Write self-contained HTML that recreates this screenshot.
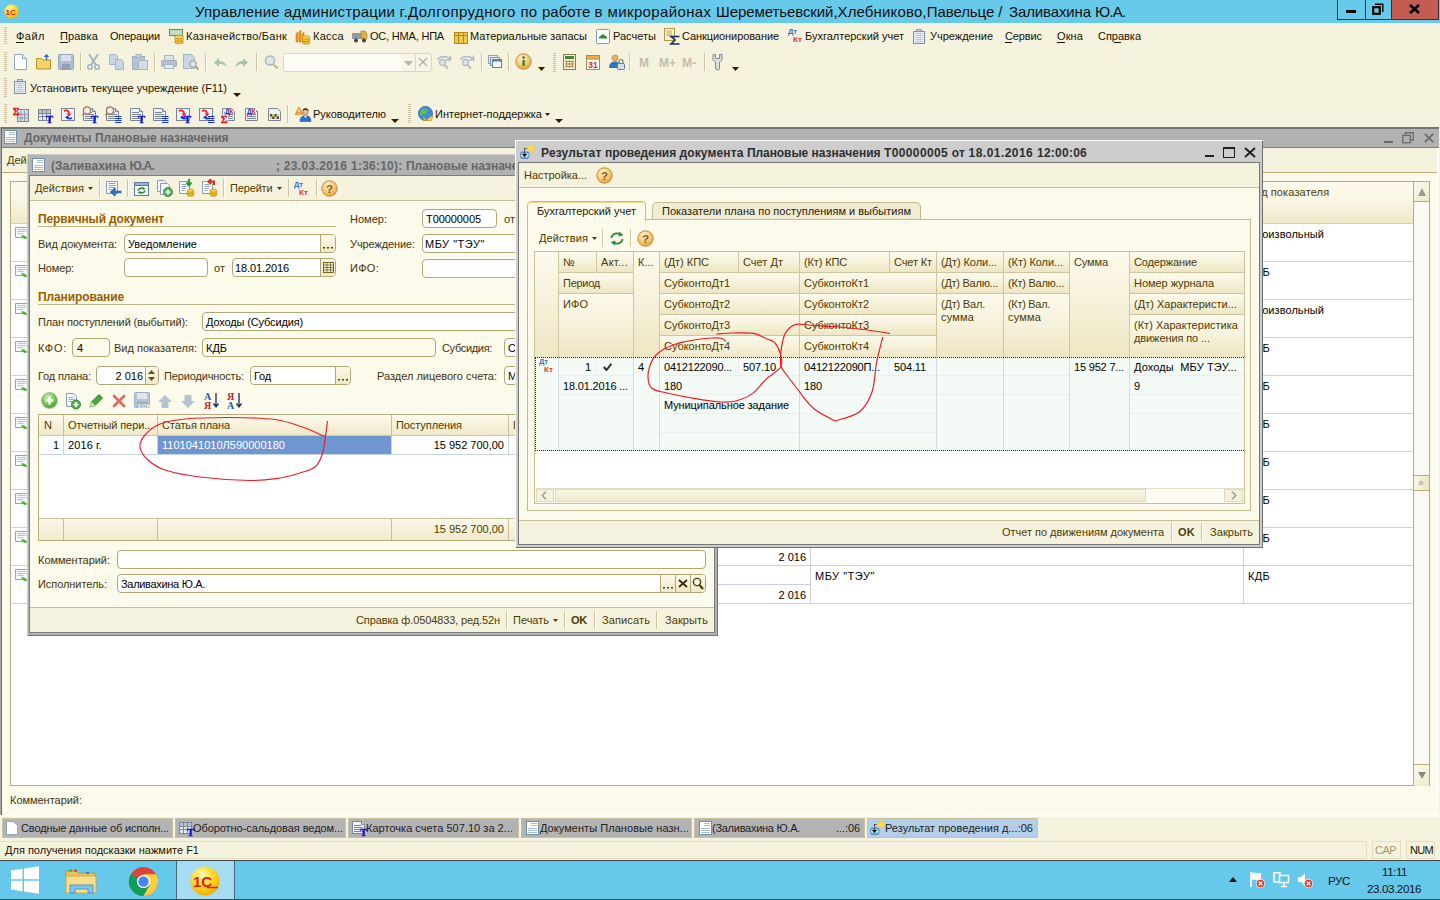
<!DOCTYPE html>
<html><head><meta charset="utf-8"><title>1C</title>
<style>
html,body{margin:0;padding:0;}
body{width:1440px;height:900px;overflow:hidden;position:relative;background:#F5F2DE;font-family:"Liberation Sans",sans-serif;font-size:11px;}
div,span,svg{position:absolute;}
span{white-space:pre;}

</style></head><body>
<div style="left:0px;top:0px;width:1440px;height:23px;background:#68CAEA;"></div>
<svg style="left:4px;top:4px" width="15" height="15" viewBox="0 0 15 15"><defs><radialGradient id="lg" cx="0.4" cy="0.3" r="0.8"><stop offset="0" stop-color="#FFF6A0"/><stop offset="0.6" stop-color="#FFD11A"/><stop offset="1" stop-color="#E8A800"/></radialGradient></defs><circle cx="7.5" cy="7.5" r="7.2" fill="url(#lg)"/><text x="1.5" y="10.5" font-family="Liberation Sans" font-weight="700" font-size="8" fill="#E0201A">1С</text></svg>
<span style="top:1.80px;font-size:15px;line-height:20px;color:#101010;letter-spacing:0.131px;left:195px;">Управление </span>
<span style="top:1.80px;font-size:15px;line-height:20px;color:#101010;letter-spacing:0.169px;left:284px;">администрации </span>
<span style="top:1.80px;font-size:15px;line-height:20px;color:#101010;letter-spacing:0.393px;left:399.4px;">г.Долгопрудного </span>
<span style="top:1.80px;font-size:15px;line-height:20px;color:#101010;letter-spacing:0.320px;left:520.4px;">по </span>
<span style="top:1.80px;font-size:15px;line-height:20px;color:#101010;left:542px;">работе </span>
<span style="top:1.80px;font-size:15px;line-height:20px;color:#101010;letter-spacing:0.430px;left:594.5px;">в </span>
<span style="top:1.80px;font-size:15px;line-height:20px;color:#101010;letter-spacing:0.374px;left:607.5px;">микрорайонах </span>
<span style="top:1.80px;font-size:15px;line-height:20px;color:#101010;letter-spacing:-0.083px;left:716px;">Шереметьевский,</span>
<span style="top:1.80px;font-size:15px;line-height:20px;color:#101010;letter-spacing:0.147px;left:837.5px;">Хлебниково,</span>
<span style="top:1.80px;font-size:15px;line-height:20px;color:#101010;letter-spacing:-0.076px;left:926.7px;">Павельце </span>
<span style="top:1.80px;font-size:15px;line-height:20px;color:#101010;letter-spacing:1.178px;left:998.3px;">/ </span>
<span style="top:1.80px;font-size:15px;line-height:20px;color:#101010;letter-spacing:-0.124px;left:1009px;">Заливахина </span>
<span style="top:1.80px;font-size:15px;line-height:20px;color:#101010;letter-spacing:-0.800px;left:1095px;">Ю.А.</span>
<div style="left:1337px;top:-1px;width:29px;height:21px;border:1px solid #3A3030;box-sizing:border-box;"></div>
<div style="left:1365px;top:-1px;width:27px;height:21px;border:1px solid #3A3030;box-sizing:border-box;"></div>
<div style="left:1391px;top:-1px;width:48px;height:21px;background:#C55C51;border:1px solid #3A3030;box-sizing:border-box;"></div>
<div style="left:1346px;top:10px;width:10px;height:3px;background:#000;"></div>
<svg style="left:1372px;top:3px" width="12" height="12" viewBox="0 0 12 12"><path d="M3 1.2H10.8V9" fill="none" stroke="#000" stroke-width="1.4"/><rect x="1.2" y="4.2" width="6.6" height="6.6" fill="none" stroke="#000" stroke-width="2.2"/></svg>
<svg style="left:1409px;top:4px" width="11" height="10" viewBox="0 0 11 10"><path d="M1 1L10 9M10 1L1 9" stroke="#000" stroke-width="2.6"/></svg>
<div style="left:4px;top:27px;width:3px;height:18px;background:repeating-linear-gradient(to bottom,#C9C2A0 0,#C9C2A0 1px,transparent 1px,transparent 2px)"></div>
<span style="top:29.19px;font-size:11px;line-height:14px;color:#1A1200;letter-spacing:0.488px;left:16px;">Файл</span>
<span style="top:29.19px;font-size:11px;line-height:14px;color:#1A1200;letter-spacing:0.138px;left:60px;">Правка</span>
<span style="top:29.19px;font-size:11px;line-height:14px;color:#1A1200;letter-spacing:-0.184px;left:110px;">Операции</span>
<span style="top:29.19px;font-size:11px;line-height:14px;color:#1A1200;letter-spacing:0.233px;left:186px;">Казначейство/Банк</span>
<span style="top:29.19px;font-size:11px;line-height:14px;color:#1A1200;letter-spacing:0.269px;left:313px;">Касса</span>
<span style="top:29.19px;font-size:11px;line-height:14px;color:#1A1200;letter-spacing:-0.197px;left:370px;">ОС, НМА, НПА</span>
<span style="top:29.19px;font-size:11px;line-height:14px;color:#1A1200;letter-spacing:0.025px;left:470px;">Материальные запасы</span>
<span style="top:29.19px;font-size:11px;line-height:14px;color:#1A1200;letter-spacing:0.013px;left:613px;">Расчеты</span>
<span style="top:29.19px;font-size:11px;line-height:14px;color:#1A1200;letter-spacing:-0.079px;left:682px;">Санкционирование</span>
<span style="top:29.19px;font-size:11px;line-height:14px;color:#1A1200;letter-spacing:-0.007px;left:805px;">Бухгалтерский учет</span>
<span style="top:29.19px;font-size:11px;line-height:14px;color:#1A1200;letter-spacing:-0.006px;left:930px;">Учреждение</span>
<span style="top:29.19px;font-size:11px;line-height:14px;color:#1A1200;letter-spacing:-0.112px;left:1005px;">Сервис</span>
<span style="top:29.19px;font-size:11px;line-height:14px;color:#1A1200;letter-spacing:0.109px;left:1057px;">Окна</span>
<span style="top:29.19px;font-size:11px;line-height:14px;color:#1A1200;letter-spacing:-0.022px;left:1098px;">Справка</span>
<div style="left:16px;top:42px;width:8px;height:1px;background:#1A1200;"></div>
<div style="left:60px;top:42px;width:8px;height:1px;background:#1A1200;"></div>
<div style="left:1005px;top:42px;width:7px;height:1px;background:#1A1200;"></div>
<div style="left:1057px;top:42px;width:8px;height:1px;background:#1A1200;"></div>
<div style="left:1114px;top:42px;width:7px;height:1px;background:#1A1200;"></div>
<svg style="left:169px;top:28px" width="16" height="16" viewBox="0 0 16 16"><rect x="0.5" y="1.5" width="13" height="6" fill="#BFE0C0" stroke="#5A8F6A"/><ellipse cx="10" cy="14" rx="4.5" ry="1.8" fill="#F2C230" stroke="#B8860B" stroke-width=".7"/><ellipse cx="10" cy="11.5" rx="4.5" ry="1.8" fill="#F2C230" stroke="#B8860B" stroke-width=".7"/><ellipse cx="10" cy="9" rx="4.5" ry="1.8" fill="#F7D55A" stroke="#B8860B" stroke-width=".7"/></svg>
<svg style="left:295px;top:29px" width="16" height="16" viewBox="0 0 16 16"><path d="M1 13V5l2-2v10zM4 13V3l2-2v12zM7 13V5l2-2v10z" fill="#F59A1C" stroke="#C46A00" stroke-width=".5"/><ellipse cx="11" cy="13.5" rx="4" ry="1.7" fill="#F2C230" stroke="#B8860B" stroke-width=".7"/><ellipse cx="11" cy="11" rx="4" ry="1.7" fill="#F2C230" stroke="#B8860B" stroke-width=".7"/><ellipse cx="11" cy="8.5" rx="4" ry="1.7" fill="#F7D55A" stroke="#B8860B" stroke-width=".7"/></svg>
<svg style="left:352px;top:30px" width="16" height="14" viewBox="0 0 16 14"><rect x="0" y="3" width="9" height="6" fill="#8E9AA6"/><path d="M9 1h4l2 3v5H9z" fill="#E0B040" stroke="#9A7A20" stroke-width=".6"/><circle cx="4" cy="10.5" r="2" fill="#444"/><circle cx="12" cy="10.5" r="2" fill="#444"/></svg>
<svg style="left:454px;top:32px" width="14" height="12" viewBox="0 0 14 12"><rect x="0.5" y="0.5" width="13" height="11" fill="#F0C84A" stroke="#B08A1A"/><path d="M0.5 3.5h13M4.5 .5v11M9.5 .5v11" stroke="#B08A1A" stroke-width="1"/></svg>
<svg style="left:596px;top:29px" width="14" height="15" viewBox="0 0 14 15"><rect x="0.5" y="0.5" width="13" height="14" rx="1" fill="#fff" stroke="#7A9CC0"/><path d="M3 8l4-3 4 3z" fill="#2E8B3A"/><path d="M3 8h8v1.5H3z" fill="#2E8B3A"/></svg>
<svg style="left:664px;top:28px" width="17" height="17" viewBox="0 0 17 17"><rect x="0.5" y="0.5" width="10" height="12" fill="#FBF3C8" stroke="#B09A50"/><path d="M2 3h6M2 5h6M2 7h6" stroke="#B09A50" stroke-width=".8"/><path d="M15.5 8.5H7l4 3.5-4 4h8.5" fill="none" stroke="#1B2A5A" stroke-width="1.6"/></svg>
<svg style="left:788px;top:28px" width="17" height="15" viewBox="0 0 17 15"><text x="0" y="6" font-family="Liberation Sans" font-weight="700" font-size="7.5" fill="#3A73B8">Дт</text><text x="5" y="13.5" font-family="Liberation Sans" font-weight="700" font-size="8" fill="#E03A2A">Кт</text></svg>
<svg style="left:913px;top:29px" width="12" height="15" viewBox="0 0 12 15"><rect x="3.500" y=".5" width="5" height="2" fill="#C9D5E2" stroke="#7D8FA6" stroke-width=".8"/><rect x=".5" y="2.500" width="11" height="12" fill="#E6EDF5" stroke="#7D8FA6"/><path d="M2.500 4.500h7M2.500 6.500h7M2.500 8.500h7M2.500 10.500h7M2.500 12.500h7" stroke="#9FB2CC" stroke-width="1"/><path d="M3.500 3v11M6 3v11M8.500 3v11" stroke="#E6EDF5" stroke-width=".8"/></svg>
<div style="left:4px;top:52px;width:3px;height:20px;background:repeating-linear-gradient(to bottom,#C9C2A0 0,#C9C2A0 1px,transparent 1px,transparent 2px)"></div>
<svg style="left:14px;top:54px" width="13" height="16" viewBox="0 0 13 16"><path d="M.5 .5h8l4 4v11H.5z" fill="#fff" stroke="#8FA7C4"/><path d="M8.5 .5v4h4" fill="#E6EEF7" stroke="#8FA7C4"/></svg>
<svg style="left:36px;top:54px" width="15" height="16" viewBox="0 0 15 16"><path d="M.5 4.5h5l1.5 1.5h7.5v9H.5z" fill="#F3D36A" stroke="#B8922A"/><path d="M10.5 6V1M8.5 3l2-2 2 2" fill="none" stroke="#2F6AA8" stroke-width="1.3"/></svg>
<svg style="left:58px;top:54px" width="16" height="16" viewBox="0 0 16 16"><rect x=".5" y=".5" width="15" height="15" rx="1" fill="#AEBFD0" stroke="#93A6BA"/><rect x="3" y="1" width="10" height="6" fill="#D9E2EB"/><rect x="4" y="10" width="8" height="5.5" fill="#8EA2B6"/></svg>
<div style="left:80px;top:53px;width:1px;height:18px;background:#CEC6A2;"></div>
<div style="left:81px;top:53px;width:1px;height:18px;background:#FFFEF6;"></div>
<svg style="left:87px;top:54px" width="13" height="16" viewBox="0 0 13 16"><path d="M2 0l7 11M11 0L4 11" stroke="#9FB2C6" stroke-width="1.8"/><circle cx="3" cy="13" r="2.2" fill="none" stroke="#9FB2C6" stroke-width="1.5"/><circle cx="10" cy="13" r="2.2" fill="none" stroke="#9FB2C6" stroke-width="1.5"/></svg>
<svg style="left:109px;top:54px" width="16" height="16" viewBox="0 0 16 16"><path d="M.5 .5h6l2 2v8h-8z" fill="#C9D5E2" stroke="#A4B6C9"/><path d="M6.5 5.5h6l2 2v8h-8z" fill="#C9D5E2" stroke="#A4B6C9"/></svg>
<svg style="left:132px;top:54px" width="16" height="16" viewBox="0 0 16 16"><rect x=".5" y="2.5" width="12" height="13" fill="#B4C3D3" stroke="#9FB0C3"/><rect x="4" y=".5" width="5" height="3" fill="#C9D5E2" stroke="#9FB0C3"/><rect x="6.5" y="6.5" width="9" height="9" fill="#D5DEE8" stroke="#A4B6C9"/></svg>
<div style="left:154px;top:53px;width:1px;height:18px;background:#CEC6A2;"></div>
<div style="left:155px;top:53px;width:1px;height:18px;background:#FFFEF6;"></div>
<svg style="left:161px;top:54px" width="16" height="16" viewBox="0 0 16 16"><rect x="3.5" y="1.5" width="9" height="5" fill="#DCE3EA" stroke="#AAB6C2"/><rect x=".5" y="6.5" width="15" height="6" rx="1" fill="#B8C1CB" stroke="#A3AEBA"/><rect x="3.5" y="10.5" width="9" height="4" fill="#E4E9EE" stroke="#AAB6C2"/></svg>
<svg style="left:183px;top:54px" width="16" height="16" viewBox="0 0 16 16"><path d="M.5 .5h8l3 3v11H.5z" fill="#C9D5E2" stroke="#A4B6C9"/><circle cx="10" cy="10" r="3.2" fill="#DDE6EF" stroke="#A0A8B0" stroke-width="1.2"/><path d="M12.5 12.5l3 3" stroke="#B09070" stroke-width="1.8"/></svg>
<div style="left:205px;top:53px;width:1px;height:18px;background:#CEC6A2;"></div>
<div style="left:206px;top:53px;width:1px;height:18px;background:#FFFEF6;"></div>
<svg style="left:214px;top:58px" width="13" height="9" viewBox="0 0 13 9"><path d="M0 4.5L5 0v3c4 0 7 2 7.5 6C10.5 6.5 8 6 5 6v3z" fill="#A8C4AE"/></svg>
<svg style="left:235px;top:58px" width="13" height="9" viewBox="0 0 13 9"><path d="M13 4.5L8 0v3C4 3 1 5 .5 9 2.500 6.500 5 6 8 6v3z" fill="#A8C4AE"/></svg>
<div style="left:256px;top:53px;width:1px;height:18px;background:#CEC6A2;"></div>
<div style="left:257px;top:53px;width:1px;height:18px;background:#FFFEF6;"></div>
<svg style="left:264px;top:54px" width="15" height="16" viewBox="0 0 15 16"><circle cx="6" cy="6.5" r="4.6" fill="#DCE4EC" stroke="#AEB8C2" stroke-width="1.5"/><path d="M9.500 10.500l4 4" stroke="#C2B4A2" stroke-width="2.2"/></svg>
<div style="left:283px;top:53px;width:149px;height:19px;background:#F7F5E6;border:1px solid #DDD7BC;box-sizing:border-box;border-radius:3px;"></div>
<div style="left:284px;top:54px;width:117px;height:17px;background:#FDFDF8;border-radius:2px;"></div>
<svg style="left:404px;top:61px" width="9" height="5" viewBox="0 0 9 5"><path d="M0 0H9L4.5 5Z" fill="#B5B5AE"/></svg>
<div style="left:415px;top:54px;width:1px;height:17px;background:#DDD7BC;"></div>
<svg style="left:418px;top:57px" width="10" height="10" viewBox="0 0 10 10"><path d="M1 1l8 8M9 1L1 9" stroke="#AFAFA8" stroke-width="1.4"/></svg>
<svg style="left:436px;top:54px" width="16" height="16" viewBox="0 0 16 16"><path d="M1.5 5.5C4 1.500 11 1.500 14 5" fill="none" stroke="#A9BBCD" stroke-width="1.6"/><path d="M14.500 1.500v4.500h-4.500" fill="none" stroke="#A9BBCD" stroke-width="1.4"/><circle cx="6.500" cy="8.500" r="3" fill="#DCE4EC" stroke="#B4BDC6" stroke-width="1.3"/><path d="M8.800 11l3 3.500" stroke="#C9B8A6" stroke-width="2"/></svg>
<svg style="left:459px;top:54px" width="16" height="16" viewBox="0 0 16 16"><path d="M1.5 5.5C4 1.500 11 1.500 14 5" fill="none" stroke="#A9BBCD" stroke-width="1.6"/><path d="M14.500 1.500v4.500h-4.500" fill="none" stroke="#A9BBCD" stroke-width="1.4"/><circle cx="6.500" cy="8.500" r="3" fill="#DCE4EC" stroke="#B4BDC6" stroke-width="1.3"/><path d="M8.800 11l3 3.500" stroke="#C9B8A6" stroke-width="2"/></svg>
<div style="left:481px;top:53px;width:1px;height:18px;background:#CEC6A2;"></div>
<div style="left:482px;top:53px;width:1px;height:18px;background:#FFFEF6;"></div>
<svg style="left:488px;top:55px" width="15" height="14" viewBox="0 0 15 14"><rect x=".5" y=".5" width="9" height="8" fill="#E8EEF5" stroke="#8DA3BC"/><rect x="2.5" y="2.500" width="9" height="8" fill="#E8EEF5" stroke="#7D95B0"/><rect x="4.5" y="4.500" width="9" height="8" fill="#F6F9FC" stroke="#5F7EA3"/><path d="M4.500 5.500h9" stroke="#5F7EA3" stroke-width="2"/></svg>
<div style="left:508px;top:53px;width:1px;height:18px;background:#CEC6A2;"></div>
<div style="left:509px;top:53px;width:1px;height:18px;background:#FFFEF6;"></div>
<svg style="left:515px;top:53px" width="17" height="17" viewBox="0 0 17 17"><defs><radialGradient id="ig" cx="0.4" cy="0.3" r="0.8"><stop offset="0" stop-color="#FFF3D0"/><stop offset="0.6" stop-color="#F2C46A"/><stop offset="1" stop-color="#D9962E"/></radialGradient></defs><circle cx="8.500" cy="8.500" r="7.700" fill="url(#ig)" stroke="#C08A3A"/><rect x="7.500" y="7" width="2.200" height="6" fill="#3E7A2A"/><circle cx="8.600" cy="4.600" r="1.300" fill="#3E7A2A"/></svg>
<svg style="left:537.5px;top:67px" width="7" height="4" viewBox="0 0 7 4"><path d="M0 0H7L3.5 4Z" fill="#2A2000"/></svg>
<div style="left:553px;top:53px;width:3px;height:20px;background:repeating-linear-gradient(to bottom,#C9C2A0 0,#C9C2A0 1px,transparent 1px,transparent 2px)"></div>
<svg style="left:563px;top:54px" width="13" height="16" viewBox="0 0 13 16"><rect x=".5" y=".5" width="12" height="15" fill="#FFF3C9" stroke="#8A7A4A"/><rect x="2" y="2" width="9" height="3" fill="#3E8A3A"/><path d="M2.500 7.500h2M5.500 7.500h2M8.500 7.500h2M2.500 10h2M5.500 10h2M8.500 10h2M2.500 12.500h2M5.500 12.500h2M8.500 12.500h2" stroke="#7A5A2A" stroke-width="1.400"/></svg>
<svg style="left:586px;top:54px" width="14" height="16" viewBox="0 0 14 16"><rect x=".5" y="1.500" width="13" height="14" fill="#fff" stroke="#B08A4A"/><rect x=".5" y="1.500" width="13" height="3.500" fill="#F0B040" stroke="#B08A4A"/><text x="7" y="14" font-family="Liberation Sans" font-weight="700" font-size="8.500" text-anchor="middle" fill="#D02A1A">31</text></svg>
<svg style="left:609px;top:54px" width="16" height="16" viewBox="0 0 16 16"><circle cx="6" cy="4" r="3" fill="#F0B060" stroke="#B07A30" stroke-width=".6"/><path d="M0 14c0-5 3-6.500 6-6.500s4 1 5 3v3.500z" fill="#2F74C0"/><rect x="8.500" y="9.500" width="7" height="6" rx="1" fill="#D8DEE6" stroke="#6A7A8C"/><path d="M10 9.500v-2a2 2 0 014 0v2" fill="none" stroke="#6A7A8C" stroke-width="1.200"/></svg>
<div style="left:629px;top:53px;width:1px;height:18px;background:#CEC6A2;"></div>
<div style="left:630px;top:53px;width:1px;height:18px;background:#FFFEF6;"></div>
<span style="top:54.84px;font-size:12px;line-height:16px;color:#C4BDAA;font-weight:700;left:639px;">M</span>
<span style="top:54.84px;font-size:12px;line-height:16px;color:#C4BDAA;font-weight:700;left:659px;">M+</span>
<span style="top:54.84px;font-size:12px;line-height:16px;color:#C4BDAA;font-weight:700;left:682px;">M-</span>
<div style="left:704px;top:53px;width:1px;height:18px;background:#CEC6A2;"></div>
<div style="left:705px;top:53px;width:1px;height:18px;background:#FFFEF6;"></div>
<svg style="left:711px;top:54px" width="13" height="17" viewBox="0 0 13 17"><path d="M2 .5v4.500c0 1.500 1 2.500 2.500 3v6a2 2 0 004 0V8C10 7.500 11 6.500 11 5V.5H8.500v4h-4v-4z" fill="#DADDE0" stroke="#7A8088" stroke-width=".9"/></svg>
<svg style="left:732px;top:67px" width="7" height="4" viewBox="0 0 7 4"><path d="M0 0H7L3.5 4Z" fill="#2A2000"/></svg>
<div style="left:4px;top:78px;width:3px;height:20px;background:repeating-linear-gradient(to bottom,#C9C2A0 0,#C9C2A0 1px,transparent 1px,transparent 2px)"></div>
<svg style="left:14px;top:79px" width="12" height="15" viewBox="0 0 12 15"><rect x="3.500" y=".5" width="5" height="2" fill="#C9D5E2" stroke="#7D8FA6" stroke-width=".8"/><rect x=".5" y="2.500" width="11" height="12" fill="#E6EDF5" stroke="#7D8FA6"/><path d="M2.500 4.500h7M2.500 6.500h7M2.500 8.500h7M2.500 10.500h7M2.500 12.500h7" stroke="#9FB2CC" stroke-width="1"/><path d="M3.500 3v11M6 3v11M8.500 3v11" stroke="#E6EDF5" stroke-width=".8"/></svg>
<span style="top:81.19px;font-size:11px;line-height:14px;color:#1A1200;letter-spacing:0.012px;left:30px;">Установить текущее учреждение (F11)</span>
<svg style="left:232.5px;top:93px" width="8" height="4" viewBox="0 0 8 4"><path d="M0 0H8L4.0 4Z" fill="#2A2000"/></svg>
<div style="left:4px;top:104px;width:3px;height:20px;background:repeating-linear-gradient(to bottom,#C9C2A0 0,#C9C2A0 1px,transparent 1px,transparent 2px)"></div>
<svg style="left:13px;top:106px" width="17" height="18" viewBox="0 0 17 18"><rect x="4.500" y="3.500" width="11" height="12" fill="#D3DAE3" stroke="#7C8796"/><path d="M8 5v10M11.500 5v10M5 8.500h10M5 12h10" stroke="#8F9BAA"/><text x="-.5" y="9" font-family="Liberation Serif" font-weight="700" font-size="11" fill="#E01414" stroke="#E01414" stroke-width=".3">Σ</text></svg>
<svg style="left:37px;top:106px" width="17" height="18" viewBox="0 0 17 18"><rect x="1.500" y="3.500" width="12" height="11" fill="#E4E9F0" stroke="#7C8796"/><rect x="2" y="4" width="11" height="3" fill="#B9C2CE"/><path d="M1.500 7.500h12M1.500 10.500h12M5.500 3.500v11M9.500 3.500v11" stroke="#7C8796"/><text x="9" y="17" font-family="Liberation Serif" font-weight="700" font-size="10.500" fill="#0A0AE6" stroke="#0A0AE6" stroke-width=".3">T</text></svg>
<svg style="left:60px;top:106px" width="17" height="18" viewBox="0 0 17 18"><rect x="1.500" y="2.500" width="13" height="12" fill="#EEF1F5" stroke="#7C8796"/><path d="M4 5c3-1.500 5 0 5 2.500" fill="none" stroke="#E4201A" stroke-width="1.800"/><path d="M6.500 7.500h5l-2.500 3z" fill="#E4201A"/><path d="M12 12c-3 1.500-5 0-5-2" fill="none" stroke="#1A30D8" stroke-width="1.800"/><path d="M4.500 10.500h5L7 7.800z" fill="#1A30D8" opacity="0"/><path d="M8.500 9.500l-3.500 2 3.500 2z" fill="#1A30D8"/></svg>
<svg style="left:82px;top:106px" width="17" height="18" viewBox="0 0 17 18"><path d="M1.500 2.500h9l3 3v9h-12z" fill="#EEF1F5" stroke="#7C8796"/><path d="M10.500 2.500v3h3" fill="#D5DAE2" stroke="#7C8796"/><path d="M3 6.500h7M3 8.500h9M3 10.500h9M3 12.500h9" stroke="#7C8796" stroke-width="1"/><circle cx="5" cy="4.500" r="3.600" fill="#F8EFE4" stroke="#9A7658" stroke-width="1.300"/><path d="M2 7.500l-1.500 2" stroke="#9A7658" stroke-width="1.500"/><text x="9" y="17" font-family="Liberation Serif" font-weight="700" font-size="10.500" fill="#0A0AE6" stroke="#0A0AE6" stroke-width=".3">T</text></svg>
<svg style="left:105px;top:106px" width="17" height="18" viewBox="0 0 17 18"><path d="M1.500 2.500h9l3 3v9h-12z" fill="#EEF1F5" stroke="#7C8796"/><path d="M10.500 2.500v3h3" fill="#D5DAE2" stroke="#7C8796"/><path d="M3 6.500h7M3 8.500h9M3 10.500h9M3 12.500h9" stroke="#7C8796" stroke-width="1"/><circle cx="5" cy="4.500" r="3.600" fill="#F8EFE4" stroke="#9A7658" stroke-width="1.300"/><path d="M2 7.500l-1.500 2" stroke="#9A7658" stroke-width="1.500"/><path d="M10 10.500h6.500M10 12.500h6.500M10 14.500h6.500M10 16.500h6.500" stroke="#1A3AE6" stroke-width="1"/></svg>
<svg style="left:129px;top:106px" width="17" height="18" viewBox="0 0 17 18"><path d="M1.500 2.500h9l3 3v9h-12z" fill="#EEF1F5" stroke="#7C8796"/><path d="M10.500 2.500v3h3" fill="#D5DAE2" stroke="#7C8796"/><path d="M3 6.500h7M3 8.500h9M3 10.500h9M3 12.500h9" stroke="#7C8796" stroke-width="1"/><text x="9" y="17" font-family="Liberation Serif" font-weight="700" font-size="10.500" fill="#0A0AE6" stroke="#0A0AE6" stroke-width=".3">T</text></svg>
<svg style="left:152px;top:106px" width="17" height="18" viewBox="0 0 17 18"><path d="M1.500 2.500h9l3 3v9h-12z" fill="#EEF1F5" stroke="#7C8796"/><path d="M10.500 2.500v3h3" fill="#D5DAE2" stroke="#7C8796"/><path d="M3 6.500h7M3 8.500h9M3 10.500h9M3 12.500h9" stroke="#7C8796" stroke-width="1"/><path d="M10 10.500h6.500M10 12.500h6.500M10 14.500h6.500M10 16.500h6.500" stroke="#1A3AE6" stroke-width="1"/></svg>
<svg style="left:175px;top:106px" width="17" height="18" viewBox="0 0 17 18"><rect x="1.500" y="2.500" width="13" height="12" fill="#EEF1F5" stroke="#7C8796"/><path d="M4 5c3-1.500 5 0 5 2.500" fill="none" stroke="#E4201A" stroke-width="1.800"/><path d="M6.500 7.500h5l-2.500 3z" fill="#E4201A"/><path d="M12 12c-3 1.500-5 0-5-2" fill="none" stroke="#1A30D8" stroke-width="1.800"/><path d="M4.500 10.500h5L7 7.800z" fill="#1A30D8" opacity="0"/><path d="M8.500 9.500l-3.500 2 3.500 2z" fill="#1A30D8"/><text x="9" y="17" font-family="Liberation Serif" font-weight="700" font-size="10.500" fill="#0A0AE6" stroke="#0A0AE6" stroke-width=".3">T</text></svg>
<svg style="left:198px;top:106px" width="17" height="18" viewBox="0 0 17 18"><rect x="1.500" y="2.500" width="13" height="12" fill="#EEF1F5" stroke="#7C8796"/><path d="M4 5c3-1.500 5 0 5 2.500" fill="none" stroke="#E4201A" stroke-width="1.800"/><path d="M6.500 7.500h5l-2.500 3z" fill="#E4201A"/><path d="M12 12c-3 1.500-5 0-5-2" fill="none" stroke="#1A30D8" stroke-width="1.800"/><path d="M4.500 10.500h5L7 7.800z" fill="#1A30D8" opacity="0"/><path d="M8.500 9.500l-3.500 2 3.500 2z" fill="#1A30D8"/><path d="M10 10.500h6.500M10 12.500h6.500M10 14.500h6.500M10 16.500h6.500" stroke="#1A3AE6" stroke-width="1"/></svg>
<svg style="left:221px;top:106px" width="17" height="18" viewBox="0 0 17 18"><path d="M1.500 2.500h9l3 3v9h-12z" fill="#EEF1F5" stroke="#7C8796"/><path d="M10.500 2.500v3h3" fill="#D5DAE2" stroke="#7C8796"/><path d="M3 6.500h7M3 8.500h9M3 10.500h9M3 12.500h9" stroke="#7C8796" stroke-width="1"/><rect x="4" y="3" width="9" height="5" fill="#EEF1F5"/><text x="4" y="8" font-family="Liberation Sans" font-weight="700" font-size="6.500" fill="#2238D0">Д</text><text x="8.500" y="8" font-family="Liberation Sans" font-weight="700" font-size="6.500" fill="#E01414">К</text><rect x="0" y="8.500" width="7" height="8" fill="#EEF1F5" opacity=".8"/><text x="-.5" y="16.500" font-family="Liberation Serif" font-weight="700" font-size="11" fill="#E01414" stroke="#E01414" stroke-width=".3">Σ</text></svg>
<svg style="left:244px;top:106px" width="17" height="18" viewBox="0 0 17 18"><path d="M1.500 2.500h9l3 3v9h-12z" fill="#EEF1F5" stroke="#7C8796"/><path d="M10.500 2.500v3h3" fill="#D5DAE2" stroke="#7C8796"/><path d="M3 6.500h7M3 8.500h9M3 10.500h9M3 12.500h9" stroke="#7C8796" stroke-width="1"/><rect x="3" y="3" width="9" height="5" fill="#EEF1F5"/><text x="3" y="8" font-family="Liberation Sans" font-weight="700" font-size="6.500" fill="#2238D0">Д</text><text x="7.500" y="8" font-family="Liberation Sans" font-weight="700" font-size="6.500" fill="#E01414">К</text></svg>
<svg style="left:267px;top:106px" width="17" height="18" viewBox="0 0 17 18"><path d="M1.500 2.500h9l3 3v9h-12z" fill="#EEF1F5" stroke="#7C8796"/><rect x="3" y="8" width="9" height="5" fill="#E8D48A"/><path d="M3 8h2.200v2.500H3zM7.500 8h2.200v2.500H7.500zM5.200 10.500h2.300V13H5.200zM9.700 10.500H12V13H9.700z" fill="#4A4A4A"/></svg>
<div style="left:287px;top:105px;width:1px;height:18px;background:#CEC6A2;"></div>
<div style="left:288px;top:105px;width:1px;height:18px;background:#FFFEF6;"></div>
<svg style="left:295px;top:106px" width="17" height="17" viewBox="0 0 17 17"><path d="M0 8.500l4-7.500 4 7.500z" fill="#F59A2A" stroke="#D87A10" stroke-width=".5"/><path d="M4 3.500v2.800M4 7.200v.8" stroke="#fff" stroke-width="1"/><circle cx="10.500" cy="5.500" r="2.800" fill="#F2C090" stroke="#7A5030" stroke-width=".6"/><path d="M7.700 5a2.800 2.800 0 015.600 0c-1.500-1.500-4-1.500-5.600 0z" fill="#4A3020"/><path d="M5 15.500c0-4.500 2.500-6 5.500-6s5.500 1.500 5.500 6z" fill="#2F6FC8" stroke="#1F4F98" stroke-width=".5"/><path d="M9 9.800l1.500 2.500 1.500-2.500z" fill="#fff"/></svg>
<span style="top:107.19px;font-size:11px;line-height:14px;color:#1A1200;letter-spacing:-0.033px;left:313px;">Руководителю</span>
<svg style="left:391px;top:119px" width="8" height="4" viewBox="0 0 8 4"><path d="M0 0H8L4.0 4Z" fill="#2A2000"/></svg>
<div style="left:408px;top:104px;width:3px;height:20px;background:repeating-linear-gradient(to bottom,#C9C2A0 0,#C9C2A0 1px,transparent 1px,transparent 2px)"></div>
<svg style="left:418px;top:106px" width="16" height="16" viewBox="0 0 16 16"><circle cx="7.500" cy="7.500" r="7" fill="#3F8FD8" stroke="#2A5F9A" stroke-width=".8"/><path d="M3 4c2-2 5-2 6 0s-1 3-2 4-3 0-4 2-1-4 0-6z" fill="#5FBF4A"/><path d="M5 10l3 4 7-5-1.500 5.500H6z" fill="#F2D040" stroke="#A88A10" stroke-width=".5"/></svg>
<span style="top:107.19px;font-size:11px;line-height:14px;color:#1A1200;letter-spacing:-0.006px;left:435px;">Интернет-поддержка</span>
<svg style="left:545px;top:113px" width="5" height="3" viewBox="0 0 5 3"><path d="M0 0H5L2.5 3Z" fill="#2A2000"/></svg>
<svg style="left:555px;top:119px" width="8" height="4" viewBox="0 0 8 4"><path d="M0 0H8L4.0 4Z" fill="#2A2000"/></svg>
<div style="left:0px;top:127px;width:1438px;height:688px;background:#FCFAEB;"></div>
<div style="left:0px;top:127px;width:1439px;height:2px;background:#757575;"></div>
<div style="left:0px;top:129px;width:1439px;height:18px;background:#B2B2B2;"></div>
<div style="left:0px;top:147px;width:1439px;height:1px;background:#7E7E7E;"></div>
<div style="left:0px;top:127px;width:1px;height:688px;background:#A8A8A8;"></div>
<div style="left:1px;top:127px;width:1px;height:688px;background:#6C6C6C;"></div>
<div style="left:1438px;top:148px;width:1px;height:668px;background:#FFFFFF;"></div>
<svg style="left:4px;top:130px" width="13" height="14" viewBox="0 0 13 14"><rect x="0.5" y="0.5" width="12" height="13" fill="#fff" stroke="#7090AE"/><path d="M5 2.5h6M5 4.5h6M2 7.5h9M2 9.5h9M2 11.5h9" stroke="#A9BDCD" stroke-width="1"/></svg>
<span style="top:129.84px;font-size:12px;line-height:16px;color:#666;font-weight:700;letter-spacing:0.019px;left:24px;">Документы </span>
<span style="top:129.84px;font-size:12px;line-height:16px;color:#666;font-weight:700;letter-spacing:-0.016px;left:95px;">Плановые </span>
<span style="top:129.84px;font-size:12px;line-height:16px;color:#666;font-weight:700;letter-spacing:-0.044px;left:160px;">назначения</span>
<div style="left:1384px;top:141px;width:9px;height:2px;background:#6B6B6B;"></div>
<svg style="left:1402px;top:132px" width="12" height="12" viewBox="0 0 12 12"><path d="M3.500 3V.75h7.750V8H9" fill="none" stroke="#6B6B6B" stroke-width="1.300"/><rect x=".75" y="3.250" width="7.500" height="7.500" fill="none" stroke="#6B6B6B" stroke-width="1.300"/></svg>
<svg style="left:1424px;top:133px" width="10" height="10" viewBox="0 0 10 10"><path d="M.8 .8l8.400 8.400M9.200 .8L.8 9.200" stroke="#6B6B6B" stroke-width="1.700"/></svg>
<div style="left:2px;top:148px;width:1435px;height:24px;background:#F5F2DE;"></div>
<div style="left:2px;top:172px;width:1435px;height:1px;background:#B8AB7B;"></div>
<span style="top:153.19px;font-size:11px;line-height:14px;color:#4D3B00;left:7px;">Действия</span>
<div style="left:10px;top:181px;width:1420px;height:605px;background:#fff;border:1px solid #B8AB7B;box-sizing:border-box;"></div>
<div style="left:11px;top:182px;width:1402px;height:42px;background:linear-gradient(#FCFAEC,#FAF7E6 40%,#EFE7C5);"></div>
<div style="left:11px;top:223px;width:1402px;height:1px;background:#D9D0AC;"></div>
<span style="top:185.19px;font-size:11px;line-height:14px;color:#4D3B00;letter-spacing:-0.067px;left:1248px;">Вид </span>
<span style="top:185.19px;font-size:11px;line-height:14px;color:#4D3B00;letter-spacing:0.151px;left:1270.7px;">показателя</span>
<div style="left:43px;top:182px;width:1px;height:42px;background:#C9BF98;"></div>
<div style="left:810px;top:182px;width:1px;height:42px;background:#C9BF98;"></div>
<div style="left:1243px;top:182px;width:1px;height:42px;background:#C9BF98;"></div>
<div style="left:11px;top:261px;width:1402px;height:1px;background:#C6D2DE;"></div>
<svg style="left:15px;top:227px" width="16" height="13" viewBox="0 0 16 13"><path d="M.5 .5h13v10H.5z" fill="#F7FAFD" stroke="#8FA3BC"/><path d="M2.500 2.500h9M2.500 4.500h9M2.500 6.500h6" stroke="#B4C4D6"/><path d="M6 8.500c2-1 5 0 6 3-2 1-4.500 0-6-3z" fill="#4CB82E"/></svg>
<span style="top:227.19px;font-size:11px;line-height:14px;color:#000;letter-spacing:0.066px;left:1248px;">Произвольный</span>
<div style="left:11px;top:299px;width:1402px;height:1px;background:#C6D2DE;"></div>
<svg style="left:15px;top:265px" width="16" height="13" viewBox="0 0 16 13"><path d="M.5 .5h13v10H.5z" fill="#F7FAFD" stroke="#8FA3BC"/><path d="M2.500 2.500h9M2.500 4.500h9M2.500 6.500h6" stroke="#B4C4D6"/><path d="M6 8.500c2-1 5 0 6 3-2 1-4.500 0-6-3z" fill="#4CB82E"/></svg>
<span style="top:265.19px;font-size:11px;line-height:14px;color:#000;letter-spacing:0.307px;left:1248px;">КДБ</span>
<div style="left:11px;top:337px;width:1402px;height:1px;background:#C6D2DE;"></div>
<svg style="left:15px;top:303px" width="16" height="13" viewBox="0 0 16 13"><path d="M.5 .5h13v10H.5z" fill="#F7FAFD" stroke="#8FA3BC"/><path d="M2.500 2.500h9M2.500 4.500h9M2.500 6.500h6" stroke="#B4C4D6"/><path d="M6 8.500c2-1 5 0 6 3-2 1-4.500 0-6-3z" fill="#4CB82E"/></svg>
<span style="top:303.19px;font-size:11px;line-height:14px;color:#000;letter-spacing:0.066px;left:1248px;">Произвольный</span>
<div style="left:11px;top:375px;width:1402px;height:1px;background:#C6D2DE;"></div>
<svg style="left:15px;top:341px" width="16" height="13" viewBox="0 0 16 13"><path d="M.5 .5h13v10H.5z" fill="#F7FAFD" stroke="#8FA3BC"/><path d="M2.500 2.500h9M2.500 4.500h9M2.500 6.500h6" stroke="#B4C4D6"/><path d="M6 8.500c2-1 5 0 6 3-2 1-4.500 0-6-3z" fill="#4CB82E"/></svg>
<span style="top:341.19px;font-size:11px;line-height:14px;color:#000;letter-spacing:0.307px;left:1248px;">КДБ</span>
<div style="left:11px;top:413px;width:1402px;height:1px;background:#C6D2DE;"></div>
<svg style="left:15px;top:379px" width="16" height="13" viewBox="0 0 16 13"><path d="M.5 .5h13v10H.5z" fill="#F7FAFD" stroke="#8FA3BC"/><path d="M2.500 2.500h9M2.500 4.500h9M2.500 6.500h6" stroke="#B4C4D6"/><path d="M6 8.500c2-1 5 0 6 3-2 1-4.500 0-6-3z" fill="#4CB82E"/></svg>
<span style="top:379.19px;font-size:11px;line-height:14px;color:#000;letter-spacing:0.307px;left:1248px;">КДБ</span>
<div style="left:11px;top:451px;width:1402px;height:1px;background:#C6D2DE;"></div>
<svg style="left:15px;top:417px" width="16" height="13" viewBox="0 0 16 13"><path d="M.5 .5h13v10H.5z" fill="#F7FAFD" stroke="#8FA3BC"/><path d="M2.500 2.500h9M2.500 4.500h9M2.500 6.500h6" stroke="#B4C4D6"/><path d="M6 8.500c2-1 5 0 6 3-2 1-4.500 0-6-3z" fill="#4CB82E"/></svg>
<span style="top:417.19px;font-size:11px;line-height:14px;color:#000;letter-spacing:0.307px;left:1248px;">КДБ</span>
<div style="left:11px;top:489px;width:1402px;height:1px;background:#C6D2DE;"></div>
<svg style="left:15px;top:455px" width="16" height="13" viewBox="0 0 16 13"><path d="M.5 .5h13v10H.5z" fill="#F7FAFD" stroke="#8FA3BC"/><path d="M2.500 2.500h9M2.500 4.500h9M2.500 6.500h6" stroke="#B4C4D6"/><path d="M6 8.500c2-1 5 0 6 3-2 1-4.500 0-6-3z" fill="#4CB82E"/></svg>
<span style="top:455.19px;font-size:11px;line-height:14px;color:#000;letter-spacing:0.307px;left:1248px;">КДБ</span>
<div style="left:11px;top:527px;width:1402px;height:1px;background:#C6D2DE;"></div>
<svg style="left:15px;top:493px" width="16" height="13" viewBox="0 0 16 13"><path d="M.5 .5h13v10H.5z" fill="#F7FAFD" stroke="#8FA3BC"/><path d="M2.500 2.500h9M2.500 4.500h9M2.500 6.500h6" stroke="#B4C4D6"/><path d="M6 8.500c2-1 5 0 6 3-2 1-4.500 0-6-3z" fill="#4CB82E"/></svg>
<span style="top:493.19px;font-size:11px;line-height:14px;color:#000;letter-spacing:0.307px;left:1248px;">КДБ</span>
<div style="left:11px;top:565px;width:1402px;height:1px;background:#C6D2DE;"></div>
<svg style="left:15px;top:531px" width="16" height="13" viewBox="0 0 16 13"><path d="M.5 .5h13v10H.5z" fill="#F7FAFD" stroke="#8FA3BC"/><path d="M2.500 2.500h9M2.500 4.500h9M2.500 6.500h6" stroke="#B4C4D6"/><path d="M6 8.500c2-1 5 0 6 3-2 1-4.500 0-6-3z" fill="#4CB82E"/></svg>
<span style="top:531.19px;font-size:11px;line-height:14px;color:#000;letter-spacing:0.307px;left:1248px;">КДБ</span>
<div style="left:11px;top:603px;width:1402px;height:1px;background:#C6D2DE;"></div>
<svg style="left:15px;top:569px" width="16" height="13" viewBox="0 0 16 13"><path d="M.5 .5h13v10H.5z" fill="#F7FAFD" stroke="#8FA3BC"/><path d="M2.500 2.500h9M2.500 4.500h9M2.500 6.500h6" stroke="#B4C4D6"/><path d="M6 8.500c2-1 5 0 6 3-2 1-4.500 0-6-3z" fill="#4CB82E"/></svg>
<span style="top:569.19px;font-size:11px;line-height:14px;color:#000;letter-spacing:0.307px;left:1248px;">КДБ</span>
<div style="left:717px;top:546px;width:93px;height:1px;background:#C6D2DE;"></div>
<span style="top:550.19px;font-size:11px;line-height:14px;color:#000;right:634.00px;">2 016</span>
<div style="left:717px;top:584px;width:93px;height:1px;background:#C6D2DE;"></div>
<span style="top:588.19px;font-size:11px;line-height:14px;color:#000;right:634.00px;">2 016</span>
<span style="top:569.19px;font-size:11px;line-height:14px;color:#000;letter-spacing:0.488px;left:815px;">МБУ &quot;ТЭУ&quot;</span>
<div style="left:810px;top:224px;width:1px;height:380px;background:#C6D2DE;"></div>
<div style="left:1243px;top:224px;width:1px;height:380px;background:#C6D2DE;"></div>
<div style="left:1413px;top:182px;width:17px;height:604px;background:#FAF9F3;border:1px solid #B8AB7B;box-sizing:border-box;border-top:none;border-bottom:none;"></div>
<div style="left:1413px;top:182px;width:17px;height:20px;background:linear-gradient(135deg,#FCFAEE,#EFE8C8);border:1px solid #B8AB7B;box-sizing:border-box;border-top:none"></div>
<svg style="left:1418px;top:188px" width="8" height="8" viewBox="0 0 8 8"><path d="M4 0L8 8H0z" fill="#9A9A9A"/></svg>
<div style="left:1413px;top:764px;width:17px;height:22px;background:linear-gradient(135deg,#FCFAEE,#EFE8C8);border:1px solid #B8AB7B;box-sizing:border-box;border-bottom:none"></div>
<svg style="left:1418px;top:772px" width="8" height="7" viewBox="0 0 8 7"><path d="M4 7L8 0H0z" fill="#8A8A8A"/></svg>
<div style="left:1413px;top:475px;width:17px;height:16px;background:linear-gradient(90deg,#FAF7E4,#ECE4C2);border:1px solid #B8AB7B;box-sizing:border-box;"></div>
<svg style="left:1418px;top:480px" width="6" height="6" viewBox="0 0 6 6"><circle cx="3" cy="3" r="2.500" fill="#C9C6B8"/></svg>
<span style="top:793.19px;font-size:11px;line-height:14px;color:#43340C;letter-spacing:-0.029px;left:10px;">Комментарий:</span>
<div style="left:27px;top:154px;width:691px;height:482px;background:#B2B2B2;"></div>
<div style="left:27px;top:154px;width:691px;height:1px;background:#CBCBCB;"></div>
<div style="left:27px;top:154px;width:1px;height:482px;background:#CBCBCB;"></div>
<div style="left:717px;top:155px;width:1px;height:481px;background:#707070;"></div>
<div style="left:28px;top:635px;width:690px;height:1px;background:#707070;"></div>
<div style="left:29px;top:175px;width:686px;height:458px;background:#7C7C7C;"></div>
<div style="left:30px;top:176px;width:684px;height:456px;background:#FCFAEB;"></div>
<svg style="left:32px;top:158px" width="13" height="14" viewBox="0 0 13 14"><rect x="0.5" y="0.5" width="12" height="13" fill="#fff" stroke="#7090AE"/><path d="M5 2.5h6M5 4.5h6M2 7.5h9M2 9.5h9M2 11.5h9" stroke="#A9BDCD" stroke-width="1"/></svg>
<span style="top:157.84px;font-size:12px;line-height:16px;color:#666;font-weight:700;letter-spacing:0.009px;left:51px;">(Заливахина </span>
<span style="top:157.84px;font-size:12px;line-height:16px;color:#666;font-weight:700;letter-spacing:-0.800px;left:129.5px;">Ю.А.</span>
<span style="top:157.84px;font-size:12px;line-height:16px;color:#666;font-weight:700;letter-spacing:0.203px;left:276px;">; </span>
<span style="top:157.84px;font-size:12px;line-height:16px;color:#666;font-weight:700;letter-spacing:0.349px;left:283.75px;">23.03.2016 </span>
<span style="top:157.84px;font-size:12px;line-height:16px;color:#666;font-weight:700;letter-spacing:0.231px;left:351px;">1:36:10): </span>
<span style="top:157.84px;font-size:12px;line-height:16px;color:#666;font-weight:700;letter-spacing:-0.016px;left:406px;">Плановые </span>
<span style="top:157.84px;font-size:12px;line-height:16px;color:#666;font-weight:700;letter-spacing:0.006px;left:471px;">назначения</span>
<div style="left:30px;top:176px;width:684px;height:24px;background:#F5F2DE;"></div>
<div style="left:30px;top:200px;width:684px;height:1px;background:#C9BE96;"></div>
<span style="top:181.19px;font-size:11px;line-height:14px;color:#4D3B00;letter-spacing:0.100px;left:35px;">Действия</span>
<svg style="left:88px;top:187px" width="5" height="3" viewBox="0 0 5 3"><path d="M0 0H5L2.5 3Z" fill="#4D3B00"/></svg>
<div style="left:99px;top:179px;width:1px;height:18px;background:#CEC6A2;"></div>
<div style="left:100px;top:179px;width:1px;height:18px;background:#FFFEF6;"></div>
<svg style="left:104px;top:180px" width="18" height="17" viewBox="0 0 18 17"><path d="M2.500 1.500h11v12h-11z" fill="#F7F9FC" stroke="#8A9CB4"/><path d="M4.500 3.500h7M4.500 5.500h7M4.500 7.500h7M4.500 9.500h3" stroke="#8FA2BC"/><path d="M17.500 12H9M11.500 8.500l-4 3.500 4 3.500" fill="none" stroke="#2A6FB8" stroke-width="2.400"/></svg>
<div style="left:127px;top:179px;width:1px;height:18px;background:#CEC6A2;"></div>
<div style="left:128px;top:179px;width:1px;height:18px;background:#FFFEF6;"></div>
<svg style="left:134px;top:182px" width="15" height="14" viewBox="0 0 15 14"><rect x=".5" y=".5" width="14" height="13" fill="#F7F9FC" stroke="#5A7A9A"/><rect x=".5" y=".5" width="14" height="3" fill="#9AB4CF" stroke="#5A7A9A"/><path d="M4 8.500a3.500 3 0 016-1.500M11 8.500a3.500 3 0 01-6 1.500" fill="none" stroke="#2E8A3A" stroke-width="1.500"/><path d="M9 5l2.500 2-3 .8zM6 12l-2.500-2 3-.8z" fill="#2E8A3A"/></svg>
<svg style="left:157px;top:180px" width="16" height="17" viewBox="0 0 16 17"><path d="M.5 .5h7l2 2v9h-9z" fill="#F2F5F9" stroke="#8A9CB4"/><path d="M3.500 3.500h7l2 2v9h-9z" fill="#F7F9FC" stroke="#8A9CB4"/><circle cx="11" cy="12" r="4.500" fill="#4CB848" stroke="#2A7A2A" stroke-width=".8"/><path d="M8.500 12h5M11 9.500v5" stroke="#fff" stroke-width="1.600"/></svg>
<svg style="left:179px;top:179px" width="17" height="18" viewBox="0 0 17 18"><path d="M.5 2.500h8l2 2v10h-10z" fill="#F7F9FC" stroke="#8A9CB4"/><path d="M2.500 5.500h5M2.500 7.500h5M2.500 9.500h4M2.500 11.500h3" stroke="#8FA2BC"/><path d="M10 0v5M7.500 3.500L10 6.500l2.500-3" fill="none" stroke="#2E9A3A" stroke-width="2"/><ellipse cx="11.500" cy="15.700" rx="3.600" ry="1.500" fill="#F2C230" stroke="#B8860B" stroke-width=".7"/><ellipse cx="11.500" cy="13.700" rx="3.600" ry="1.500" fill="#F2C230" stroke="#B8860B" stroke-width=".7"/><ellipse cx="11.500" cy="11.700" rx="3.600" ry="1.500" fill="#F7D55A" stroke="#B8860B" stroke-width=".7"/></svg>
<svg style="left:202px;top:179px" width="17" height="18" viewBox="0 0 17 18"><path d="M.5 2.500h8l2 2v10h-10z" fill="#F7F9FC" stroke="#8A9CB4"/><path d="M2.500 5.500h5M2.500 7.500h5M2.500 9.500h4M2.500 11.500h3" stroke="#8FA2BC"/><path d="M12 6V2.500H7M9 0L6.500 2.500 9 5" fill="none" stroke="#D8301A" stroke-width="2"/><ellipse cx="11.500" cy="15.700" rx="3.600" ry="1.500" fill="#F2C230" stroke="#B8860B" stroke-width=".7"/><ellipse cx="11.500" cy="13.700" rx="3.600" ry="1.500" fill="#F2C230" stroke="#B8860B" stroke-width=".7"/><ellipse cx="11.500" cy="11.700" rx="3.600" ry="1.500" fill="#F7D55A" stroke="#B8860B" stroke-width=".7"/></svg>
<div style="left:223px;top:179px;width:1px;height:18px;background:#CEC6A2;"></div>
<div style="left:224px;top:179px;width:1px;height:18px;background:#FFFEF6;"></div>
<span style="top:181.19px;font-size:11px;line-height:14px;color:#4D3B00;letter-spacing:-0.156px;left:230px;">Перейти</span>
<svg style="left:277px;top:187px" width="5" height="3" viewBox="0 0 5 3"><path d="M0 0H5L2.5 3Z" fill="#4D3B00"/></svg>
<div style="left:288px;top:179px;width:1px;height:18px;background:#CEC6A2;"></div>
<div style="left:289px;top:179px;width:1px;height:18px;background:#FFFEF6;"></div>
<svg style="left:294px;top:181px" width="17" height="15" viewBox="0 0 17 15"><text x="0" y="6" font-family="Liberation Sans" font-weight="700" font-size="7.5" fill="#3A73B8">Дт</text><text x="5" y="13.5" font-family="Liberation Sans" font-weight="700" font-size="8" fill="#E03A2A">Кт</text></svg>
<div style="left:316px;top:179px;width:1px;height:18px;background:#CEC6A2;"></div>
<div style="left:317px;top:179px;width:1px;height:18px;background:#FFFEF6;"></div>
<svg style="left:321px;top:180px" width="17" height="17" viewBox="0 0 17 17"><defs><radialGradient id="hg" cx="0.4" cy="0.3" r="0.8"><stop offset="0" stop-color="#FFF3D0"/><stop offset="0.6" stop-color="#F2C46A"/><stop offset="1" stop-color="#D9962E"/></radialGradient></defs><circle cx="8.5" cy="8.5" r="7.7" fill="url(#hg)" stroke="#C08A3A" stroke-width="1"/><text x="8.5" y="12.6" font-family="Liberation Sans" font-weight="700" font-size="11.5" text-anchor="middle" fill="#8A5A1A">?</text></svg>
<span style="top:210.84px;font-size:12px;line-height:16px;color:#9A5D00;font-weight:700;letter-spacing:-0.150px;left:38px;">Первичный документ</span>
<div style="left:38px;top:226px;width:298px;height:1px;background:#BDB285;"></div>
<span style="top:237.19px;font-size:11px;line-height:14px;color:#43340C;letter-spacing:-0.047px;left:38px;">Вид документа:</span>
<div style="left:124px;top:234px;width:212px;height:19px;background:#fff;border:1px solid #B3A674;box-sizing:border-box;border-radius:4px;"></div>
<div style="left:320px;top:235px;width:15px;height:17px;background:linear-gradient(#FBF8E8,#EFE8C8);border-left:1px solid #B3A674;box-sizing:border-box;border-radius:0 3px 3px 0;"></div>
<svg style="left:323px;top:247px" width="10" height="2" viewBox="0 0 10 2"><path d="M0 0h2v1.500H0zM4 0h2v1.500H4zM8 0h2v1.500H8z" fill="#5A4500"/></svg>
<span style="top:237.19px;font-size:11px;line-height:14px;color:#000;letter-spacing:0.004px;left:128px;">Уведомление</span>
<span style="top:261.19px;font-size:11px;line-height:14px;color:#43340C;letter-spacing:-0.154px;left:38px;">Номер:</span>
<div style="left:124px;top:258px;width:84px;height:19px;background:#fff;border:1px solid #B3A674;box-sizing:border-box;border-radius:4px;"></div>
<span style="top:261.19px;font-size:11px;line-height:14px;color:#43340C;letter-spacing:0.039px;left:214px;">от</span>
<div style="left:232px;top:258px;width:104px;height:19px;background:#fff;border:1px solid #B3A674;box-sizing:border-box;border-radius:4px;"></div>
<div style="left:320px;top:259px;width:15px;height:17px;background:linear-gradient(#FBF8E8,#EFE8C8);border-left:1px solid #B3A674;box-sizing:border-box;border-radius:0 3px 3px 0;"></div>
<svg style="left:323px;top:262px" width="11" height="11" viewBox="0 0 11 11"><rect x=".5" y=".5" width="10" height="10" fill="#F6F0D2" stroke="#6A5510" stroke-width=".9"/><path d="M.5 3h10M.5 5.500h10M.5 8h10M4 .5v10M7.500 .5v10" stroke="#6A5510" stroke-width=".7"/></svg>
<span style="top:261.19px;font-size:11px;line-height:14px;color:#000;letter-spacing:-0.106px;left:235px;">18.01.2016</span>
<span style="top:212.19px;font-size:11px;line-height:14px;color:#43340C;letter-spacing:0.013px;left:350px;">Номер:</span>
<div style="left:422px;top:209px;width:75px;height:19px;background:#fff;border:1px solid #B3A674;box-sizing:border-box;border-radius:4px;"></div>
<span style="top:212.19px;font-size:11px;line-height:14px;color:#000;letter-spacing:-0.075px;left:426px;">Т00000005</span>
<span style="top:212.19px;font-size:11px;line-height:14px;color:#43340C;letter-spacing:0.039px;left:504px;">от</span>
<span style="top:237.19px;font-size:11px;line-height:14px;color:#43340C;letter-spacing:-0.102px;left:350px;">Учреждение:</span>
<div style="left:422px;top:234px;width:280px;height:19px;background:#fff;border:1px solid #B3A674;box-sizing:border-box;border-radius:4px;"></div>
<span style="top:237.19px;font-size:11px;line-height:14px;color:#000;letter-spacing:0.488px;left:425px;">МБУ &quot;ТЭУ&quot;</span>
<span style="top:261.19px;font-size:11px;line-height:14px;color:#43340C;letter-spacing:0.277px;left:350px;">ИФО:</span>
<div style="left:422px;top:259px;width:280px;height:19px;background:#fff;border:1px solid #B3A674;box-sizing:border-box;border-radius:4px;"></div>
<span style="top:288.84px;font-size:12px;line-height:16px;color:#9A5D00;font-weight:700;letter-spacing:-0.117px;left:38px;">Планирование</span>
<div style="left:38px;top:304px;width:668px;height:1px;background:#BDB285;"></div>
<span style="top:315.19px;font-size:11px;line-height:14px;color:#43340C;letter-spacing:-0.126px;left:38px;">План поступлений (выбытий):</span>
<div style="left:202px;top:312px;width:504px;height:19px;background:#fff;border:1px solid #B3A674;box-sizing:border-box;border-radius:4px;"></div>
<span style="top:315.19px;font-size:11px;line-height:14px;color:#000;letter-spacing:-0.143px;left:206px;">Доходы (Субсидия)</span>
<span style="top:341.19px;font-size:11px;line-height:14px;color:#43340C;letter-spacing:0.746px;left:38px;">КФО:</span>
<div style="left:72px;top:338px;width:38px;height:19px;background:#FCFAEB;border:1px solid #B3A674;box-sizing:border-box;border-radius:4px;"></div>
<span style="top:341.19px;font-size:11px;line-height:14px;color:#000;left:77px;">4</span>
<span style="top:341.19px;font-size:11px;line-height:14px;color:#43340C;letter-spacing:-0.007px;left:114px;">Вид показателя:</span>
<div style="left:202px;top:338px;width:234px;height:19px;background:#FCFAEB;border:1px solid #B3A674;box-sizing:border-box;border-radius:4px;"></div>
<span style="top:341.19px;font-size:11px;line-height:14px;color:#000;letter-spacing:-0.026px;left:206px;">КДБ</span>
<span style="top:341.19px;font-size:11px;line-height:14px;color:#43340C;letter-spacing:-0.330px;left:442px;">Субсидия:</span>
<div style="left:504px;top:338px;width:200px;height:19px;background:#fff;border:1px solid #B3A674;box-sizing:border-box;border-radius:4px;"></div>
<span style="top:341.19px;font-size:11px;line-height:14px;color:#000;left:508px;">С</span>
<span style="top:369.19px;font-size:11px;line-height:14px;color:#43340C;letter-spacing:-0.131px;left:38px;">Год плана:</span>
<div style="left:96px;top:366px;width:63px;height:19px;background:#fff;border:1px solid #B3A674;box-sizing:border-box;border-radius:4px;"></div>
<span style="top:369.19px;font-size:11px;line-height:14px;color:#000;right:1297.00px;">2 016</span>
<div style="left:145px;top:367px;width:13px;height:17px;background:linear-gradient(#FBF8E8,#EFE8C8);border-left:1px solid #B3A674;box-sizing:border-box;border-radius:0 3px 3px 0;"></div>
<svg style="left:148px;top:370px" width="7" height="11" viewBox="0 0 7 11"><path d="M3.500 0L7 4H0zM3.500 11L7 7H0z" fill="#6A5208"/></svg>
<span style="top:369.19px;font-size:11px;line-height:14px;color:#43340C;letter-spacing:-0.142px;left:164px;">Периодичность:</span>
<div style="left:250px;top:366px;width:101px;height:19px;background:#fff;border:1px solid #B3A674;box-sizing:border-box;border-radius:4px;"></div>
<div style="left:335px;top:367px;width:15px;height:17px;background:linear-gradient(#FBF8E8,#EFE8C8);border-left:1px solid #B3A674;box-sizing:border-box;border-radius:0 3px 3px 0;"></div>
<svg style="left:338px;top:379px" width="10" height="2" viewBox="0 0 10 2"><path d="M0 0h2v1.500H0zM4 0h2v1.500H4zM8 0h2v1.500H8z" fill="#5A4500"/></svg>
<span style="top:369.19px;font-size:11px;line-height:14px;color:#000;letter-spacing:-0.172px;left:254px;">Год</span>
<span style="top:369.19px;font-size:11px;line-height:14px;color:#43340C;letter-spacing:-0.001px;left:377px;">Раздел лицевого счета:</span>
<div style="left:504px;top:366px;width:200px;height:19px;background:#fff;border:1px solid #B3A674;box-sizing:border-box;border-radius:4px;"></div>
<span style="top:369.19px;font-size:11px;line-height:14px;color:#000;left:508px;">М</span>
<svg style="left:41px;top:392px" width="17" height="17" viewBox="0 0 17 17"><defs><radialGradient id="gg" cx=".4" cy=".3" r=".8"><stop offset="0" stop-color="#C8EFB0"/><stop offset=".6" stop-color="#6CC04A"/><stop offset="1" stop-color="#3E962E"/></radialGradient></defs><circle cx="8.500" cy="8.500" r="7.800" fill="url(#gg)" stroke="#8FAE7A" stroke-width="1"/><path d="M4.500 8.500h8M8.500 4.500v8" stroke="#fff" stroke-width="2.400"/></svg>
<svg style="left:65px;top:393px" width="17" height="17" viewBox="0 0 17 17"><path d="M1.500 .5h7l3 3v10h-10z" fill="#F4F7FB" stroke="#8A9CB4"/><path d="M3.500 4.500h5M3.500 6.500h6M3.500 8.500h4" stroke="#9AAAC0"/><circle cx="11" cy="11.500" r="4.500" fill="#4CB848" stroke="#2A7A2A" stroke-width=".8"/><path d="M8.500 11.500h5M11 9v5" stroke="#fff" stroke-width="1.600"/></svg>
<svg style="left:89px;top:393px" width="15" height="15" viewBox="0 0 15 15"><path d="M1 14l1.500-5L10 1.500l3.500 3.500L6 12.500z" fill="#3FAE3A" stroke="#1E6A1E" stroke-width=".8"/><path d="M1 14l1.500-5L6 12.500z" fill="#F4E0B0"/></svg>
<svg style="left:112px;top:394px" width="14" height="14" viewBox="0 0 14 14"><path d="M2 2l10 10M12 2L2 12" stroke="#E4685C" stroke-width="2.600" stroke-linecap="round"/></svg>
<svg style="left:134px;top:392px" width="17" height="17" viewBox="0 0 17 17"><rect x=".5" y=".5" width="15" height="15" rx="1" fill="#B9C6D4" stroke="#9FB0C3"/><rect x="3" y="1" width="10" height="6" fill="#DEE6EE"/><rect x="3" y="9.500" width="11" height="6" fill="#9FB0C3"/><text x="4" y="15.500" font-family="Liberation Sans" font-weight="700" font-size="6" fill="#E8EEF4">EOK</text></svg>
<svg style="left:158px;top:395px" width="14" height="13" viewBox="0 0 14 13"><path d="M7 0L14 7h-3.500v6h-7V7H0z" fill="#B4C2D2"/></svg>
<svg style="left:181px;top:395px" width="14" height="13" viewBox="0 0 14 13"><path d="M7 13L14 6h-3.500V0h-7v6H0z" fill="#B4C2D2"/></svg>
<svg style="left:203px;top:391px" width="18" height="19" viewBox="0 0 18 19"><text x="1" y="8.500" font-family="Liberation Serif" font-weight="700" font-size="10" fill="#1E5AA8">А</text><text x="1" y="18" font-family="Liberation Serif" font-weight="700" font-size="10" fill="#B0281E">Я</text><path d="M13 2v13M10.500 12.500l2.500 3.500 2.500-3.500" fill="none" stroke="#1A2A5A" stroke-width="1.300"/></svg>
<svg style="left:226px;top:391px" width="18" height="19" viewBox="0 0 18 19"><text x="1" y="8.500" font-family="Liberation Serif" font-weight="700" font-size="10" fill="#B0281E">Я</text><text x="1" y="18" font-family="Liberation Serif" font-weight="700" font-size="10" fill="#1E5AA8">А</text><path d="M13 2v13M10.500 12.500l2.500 3.500 2.500-3.500" fill="none" stroke="#1A2A5A" stroke-width="1.300"/></svg>
<div style="left:38px;top:414px;width:680px;height:127px;background:#fff;border:1px solid #B8AB7B;box-sizing:border-box;"></div>
<div style="left:39px;top:415px;width:680px;height:21px;background:linear-gradient(#FCFAEC,#F6F1DA 50%,#EFE7C5);"></div>
<div style="left:39px;top:435px;width:680px;height:1px;background:#D2C8A2;"></div>
<div style="left:63px;top:415px;width:1px;height:21px;background:#C9BF98;"></div>
<div style="left:63px;top:436px;width:1px;height:18px;background:#C6D2DE;"></div>
<div style="left:157px;top:415px;width:1px;height:21px;background:#C9BF98;"></div>
<div style="left:157px;top:436px;width:1px;height:18px;background:#C6D2DE;"></div>
<div style="left:391px;top:415px;width:1px;height:21px;background:#C9BF98;"></div>
<div style="left:391px;top:436px;width:1px;height:18px;background:#C6D2DE;"></div>
<div style="left:508px;top:415px;width:1px;height:21px;background:#C9BF98;"></div>
<div style="left:508px;top:436px;width:1px;height:18px;background:#C6D2DE;"></div>
<span style="top:418.19px;font-size:11px;line-height:14px;color:#4D3B00;left:44px;">N</span>
<span style="top:418.19px;font-size:11px;line-height:14px;color:#4D3B00;letter-spacing:-0.113px;left:68px;">Отчетный пери...</span>
<span style="top:418.19px;font-size:11px;line-height:14px;color:#4D3B00;letter-spacing:-0.100px;left:162px;">Статья плана</span>
<span style="top:418.19px;font-size:11px;line-height:14px;color:#4D3B00;letter-spacing:-0.078px;left:396px;">Поступления</span>
<span style="top:418.19px;font-size:11px;line-height:14px;color:#4D3B00;left:513px;">В</span>
<div style="left:158px;top:436px;width:233px;height:18px;background:#7096CF;"></div>
<div style="left:39px;top:454px;width:680px;height:1px;background:#C2D4EA;"></div>
<span style="top:438.19px;font-size:11px;line-height:14px;color:#000;right:1381.00px;">1</span>
<span style="top:438.19px;font-size:11px;line-height:14px;color:#000;letter-spacing:0.105px;left:68px;">2016 г.</span>
<span style="top:438.19px;font-size:11px;line-height:14px;color:#fff;letter-spacing:0.018px;left:162px;">1101041010Л590000180</span>
<span style="top:438.19px;font-size:11px;line-height:14px;color:#000;right:936.00px;">15 952 700,00</span>
<div style="left:39px;top:519px;width:680px;height:21px;background:linear-gradient(#FBF8E9,#F1EACC);"></div>
<div style="left:39px;top:518px;width:680px;height:1px;background:#C9BF98;"></div>
<div style="left:63px;top:519px;width:1px;height:21px;background:#C9BF98;"></div>
<div style="left:157px;top:519px;width:1px;height:21px;background:#C9BF98;"></div>
<div style="left:391px;top:519px;width:1px;height:21px;background:#C9BF98;"></div>
<div style="left:508px;top:519px;width:1px;height:21px;background:#C9BF98;"></div>
<span style="top:522.19px;font-size:11px;line-height:14px;color:#4D3B00;right:936.00px;">15 952 700,00</span>
<span style="top:553.19px;font-size:11px;line-height:14px;color:#43340C;letter-spacing:-0.029px;left:38px;">Комментарий:</span>
<div style="left:117px;top:550px;width:589px;height:19px;background:#fff;border:1px solid #B3A674;box-sizing:border-box;border-radius:4px;"></div>
<span style="top:577.19px;font-size:11px;line-height:14px;color:#43340C;letter-spacing:-0.062px;left:38px;">Исполнитель:</span>
<div style="left:117px;top:574px;width:589px;height:19px;background:#fff;border:1px solid #B3A674;box-sizing:border-box;border-radius:4px;"></div>
<div style="left:660px;top:575px;width:15px;height:17px;background:linear-gradient(#FBF8E8,#EFE8C8);border-left:1px solid #B3A674;box-sizing:border-box;border-radius:0 3px 3px 0;"></div>
<svg style="left:663px;top:587px" width="10" height="2" viewBox="0 0 10 2"><path d="M0 0h2v1.500H0zM4 0h2v1.500H4zM8 0h2v1.500H8z" fill="#5A4500"/></svg>
<div style="left:675px;top:575px;width:15px;height:17px;background:linear-gradient(#FBF8E8,#EFE8C8);border-left:1px solid #B3A674;box-sizing:border-box;"></div>
<svg style="left:678px;top:579px" width="10" height="9" viewBox="0 0 10 9"><path d="M1 1l8 7M9 1L1 8" stroke="#3A2C00" stroke-width="1.800"/></svg>
<div style="left:690px;top:575px;width:15px;height:17px;background:linear-gradient(#FBF8E8,#EFE8C8);border-left:1px solid #B3A674;box-sizing:border-box;border-radius:0 3px 3px 0;"></div>
<svg style="left:692px;top:577px" width="12" height="13" viewBox="0 0 12 13"><circle cx="5" cy="5" r="3.600" fill="#FBF8E8" stroke="#4A3A08" stroke-width="1.400"/><path d="M7.500 8l3.500 4" stroke="#4A3A08" stroke-width="2"/></svg>
<span style="top:577.19px;font-size:11px;line-height:14px;color:#000;letter-spacing:-0.308px;left:121px;">Заливахина Ю.А.</span>
<div style="left:30px;top:607px;width:684px;height:1px;background:#C9BE96;"></div>
<div style="left:30px;top:608px;width:684px;height:24px;background:#F5F2DE;"></div>
<span style="top:613.19px;font-size:11px;line-height:14px;color:#4D3B00;letter-spacing:-0.117px;left:356px;">Справка ф.0504833, ред.52н</span>
<div style="left:506px;top:611px;width:1px;height:18px;background:#CEC6A2;"></div>
<div style="left:507px;top:611px;width:1px;height:18px;background:#FFFEF6;"></div>
<span style="top:613.19px;font-size:11px;line-height:14px;color:#4D3B00;letter-spacing:-0.008px;left:513px;">Печать</span>
<svg style="left:553px;top:619px" width="5" height="3" viewBox="0 0 5 3"><path d="M0 0H5L2.5 3Z" fill="#4D3B00"/></svg>
<div style="left:564px;top:611px;width:1px;height:18px;background:#CEC6A2;"></div>
<div style="left:565px;top:611px;width:1px;height:18px;background:#FFFEF6;"></div>
<span style="top:613.19px;font-size:11px;line-height:14px;color:#4D3B00;font-weight:700;letter-spacing:-0.250px;left:571px;">OK</span>
<div style="left:594px;top:611px;width:1px;height:18px;background:#CEC6A2;"></div>
<div style="left:595px;top:611px;width:1px;height:18px;background:#FFFEF6;"></div>
<span style="top:613.19px;font-size:11px;line-height:14px;color:#4D3B00;letter-spacing:0.123px;left:602px;">Записать</span>
<div style="left:656px;top:611px;width:1px;height:18px;background:#CEC6A2;"></div>
<div style="left:657px;top:611px;width:1px;height:18px;background:#FFFEF6;"></div>
<span style="top:613.19px;font-size:11px;line-height:14px;color:#4D3B00;letter-spacing:0.089px;left:665px;">Закрыть</span>
<div style="left:515px;top:140px;width:748px;height:408px;background:#CDCDCD;"></div>
<div style="left:515px;top:140px;width:748px;height:1px;background:#FFFFFF;"></div>
<div style="left:515px;top:140px;width:1px;height:408px;background:#FFFFFF;"></div>
<div style="left:1262px;top:141px;width:1px;height:407px;background:#6E6E6E;"></div>
<div style="left:516px;top:547px;width:747px;height:1px;background:#6E6E6E;"></div>
<div style="left:518px;top:162px;width:742px;height:383px;background:#767676;"></div>
<div style="left:519px;top:163px;width:740px;height:381px;background:#FCFAEB;"></div>
<svg style="left:519px;top:143px" width="17" height="17" viewBox="0 0 17 17"><defs><linearGradient id="rb" x1="0" y1="0" x2="0" y2="1"><stop offset="0" stop-color="#5FA4D8"/><stop offset=".55" stop-color="#C4E8FA"/><stop offset="1" stop-color="#4E94CC"/></linearGradient></defs><rect x="1.500" y="9" width="8.500" height="6.500" rx="2" fill="url(#rb)" stroke="#3F7FB8" stroke-width=".8"/><path d="M5.500 5.500V11M5.500 5.500H9" fill="none" stroke="#000" stroke-width="1" stroke-dasharray="1 1"/><path d="M3 11h5l-2.500 3z" fill="#000"/><path d="M12 1.300L16.200 5.500 12 9.700 7.800 5.500z" fill="#F8DC3A" stroke="#EFC070" stroke-width=".6"/></svg>
<span style="top:144.84px;font-size:12px;line-height:16px;color:#2E2E2E;font-weight:700;letter-spacing:0.172px;left:541px;">Результат </span>
<span style="top:144.84px;font-size:12px;line-height:16px;color:#2E2E2E;font-weight:700;letter-spacing:-0.060px;left:605px;">проведения </span>
<span style="top:144.84px;font-size:12px;line-height:16px;color:#2E2E2E;font-weight:700;letter-spacing:0.144px;left:679.4px;">документа </span>
<span style="top:144.84px;font-size:12px;line-height:16px;color:#2E2E2E;font-weight:700;letter-spacing:-0.082px;left:747px;">Плановые </span>
<span style="top:144.84px;font-size:12px;line-height:16px;color:#2E2E2E;font-weight:700;letter-spacing:0.030px;left:811.4px;">назначения </span>
<span style="top:144.84px;font-size:12px;line-height:16px;color:#2E2E2E;font-weight:700;letter-spacing:0.374px;left:884px;">Т00000005 </span>
<span style="top:144.84px;font-size:12px;line-height:16px;color:#2E2E2E;font-weight:700;letter-spacing:0.183px;left:951.8px;">от </span>
<span style="top:144.84px;font-size:12px;line-height:16px;color:#2E2E2E;font-weight:700;letter-spacing:0.454px;left:968.6px;">18.01.2016 </span>
<span style="top:144.84px;font-size:12px;line-height:16px;color:#2E2E2E;font-weight:700;letter-spacing:0.244px;left:1037px;">12:00:06</span>
<div style="left:1205px;top:155px;width:9px;height:2px;background:#1E1E1E;"></div>
<div style="left:1223px;top:147px;width:12px;height:11px;border:1px solid #1E1E1E;box-sizing:border-box;border-top-width:2px;"></div>
<svg style="left:1244px;top:147px" width="12" height="11" viewBox="0 0 12 11"><path d="M1 1l10 9M11 1L1 10" stroke="#1E1E1E" stroke-width="1.900"/></svg>
<div style="left:519px;top:163px;width:740px;height:24px;background:#F5F2DE;"></div>
<div style="left:519px;top:187px;width:740px;height:1px;background:#C9BE96;"></div>
<span style="top:168.19px;font-size:11px;line-height:14px;color:#4D3B00;letter-spacing:-0.027px;left:524px;">Настройка...</span>
<svg style="left:596px;top:167px" width="17" height="17" viewBox="0 0 17 17"><defs><radialGradient id="hg" cx="0.4" cy="0.3" r="0.8"><stop offset="0" stop-color="#FFF3D0"/><stop offset="0.6" stop-color="#F2C46A"/><stop offset="1" stop-color="#D9962E"/></radialGradient></defs><circle cx="8.5" cy="8.5" r="7.7" fill="url(#hg)" stroke="#C08A3A" stroke-width="1"/><text x="8.5" y="12.6" font-family="Liberation Sans" font-weight="700" font-size="11.5" text-anchor="middle" fill="#8A5A1A">?</text></svg>
<div style="left:527px;top:219px;width:724px;height:292px;background:#FCFAEB;border:1px solid #C4B98F;box-sizing:border-box;"></div>
<div style="left:652px;top:202px;width:269px;height:18px;background:#F1ECD3;border:1px solid #C4B98F;box-sizing:border-box;border-radius:5px 5px 0 0;border-bottom:1px solid #C4B98F;"></div>
<span style="top:204.19px;font-size:11px;line-height:14px;color:#2A2000;letter-spacing:0.011px;left:662px;">Показатели плана по поступлениям и выбытиям</span>
<div style="left:527px;top:201px;width:119px;height:20px;background:#FCFAEB;border:1px solid #C4B98F;box-sizing:border-box;border-radius:5px 5px 0 0;border-bottom:none;"></div>
<div style="left:530px;top:202px;width:113px;height:1px;background:#F6D890;"></div>
<span style="top:204.19px;font-size:11px;line-height:14px;color:#2A2000;letter-spacing:-0.007px;left:537px;">Бухгалтерский учет</span>
<span style="top:231.19px;font-size:11px;line-height:14px;color:#4D3B00;letter-spacing:0.100px;left:539px;">Действия</span>
<svg style="left:592px;top:237px" width="5" height="3" viewBox="0 0 5 3"><path d="M0 0H5L2.5 3Z" fill="#4D3B00"/></svg>
<div style="left:602px;top:229px;width:1px;height:18px;background:#CEC6A2;"></div>
<div style="left:603px;top:229px;width:1px;height:18px;background:#FFFEF6;"></div>
<svg style="left:609px;top:231px" width="16" height="15" viewBox="0 0 16 15"><path d="M2.500 7a5.500 5 0 019.500-3" fill="none" stroke="#2E8A3A" stroke-width="1.800"/><path d="M13.500 8a5.500 5 0 01-9.500 3" fill="none" stroke="#2E8A3A" stroke-width="1.800"/><path d="M10 .5l4.500 3.500-5 1.500zM6 14.500L1.500 11l5-1.500z" fill="#2E8A3A"/></svg>
<div style="left:630px;top:229px;width:1px;height:18px;background:#CEC6A2;"></div>
<div style="left:631px;top:229px;width:1px;height:18px;background:#FFFEF6;"></div>
<svg style="left:637px;top:230px" width="17" height="17" viewBox="0 0 17 17"><defs><radialGradient id="hg" cx="0.4" cy="0.3" r="0.8"><stop offset="0" stop-color="#FFF3D0"/><stop offset="0.6" stop-color="#F2C46A"/><stop offset="1" stop-color="#D9962E"/></radialGradient></defs><circle cx="8.5" cy="8.5" r="7.7" fill="url(#hg)" stroke="#C08A3A" stroke-width="1"/><text x="8.5" y="12.6" font-family="Liberation Sans" font-weight="700" font-size="11.5" text-anchor="middle" fill="#8A5A1A">?</text></svg>
<div style="left:534px;top:251px;width:711px;height:253px;background:#fff;border:1px solid #C9BF98;box-sizing:border-box;"></div>
<div style="left:535px;top:252px;width:709px;height:105px;background:#CFC6A0;"></div>
<div style="left:535px;top:252px;width:23px;height:105px;background:linear-gradient(#FCFAEC,#F7F2DC 45%,#EEE6C3);"></div>
<div style="left:559px;top:252px;width:37px;height:20px;background:linear-gradient(#FCFAEC,#F7F2DC 45%,#EEE6C3);"></div>
<div style="left:597px;top:252px;width:36px;height:20px;background:linear-gradient(#FCFAEC,#F7F2DC 45%,#EEE6C3);"></div>
<div style="left:559px;top:273px;width:74px;height:20px;background:linear-gradient(#FCFAEC,#F7F2DC 45%,#EEE6C3);"></div>
<div style="left:559px;top:294px;width:74px;height:63px;background:linear-gradient(#FCFAEC,#F7F2DC 45%,#EEE6C3);"></div>
<div style="left:634px;top:252px;width:25px;height:105px;background:linear-gradient(#FCFAEC,#F7F2DC 45%,#EEE6C3);"></div>
<div style="left:660px;top:252px;width:78px;height:20px;background:linear-gradient(#FCFAEC,#F7F2DC 45%,#EEE6C3);"></div>
<div style="left:739px;top:252px;width:60px;height:20px;background:linear-gradient(#FCFAEC,#F7F2DC 45%,#EEE6C3);"></div>
<div style="left:660px;top:273px;width:139px;height:20px;background:linear-gradient(#FCFAEC,#F7F2DC 45%,#EEE6C3);"></div>
<div style="left:660px;top:294px;width:139px;height:20px;background:linear-gradient(#FCFAEC,#F7F2DC 45%,#EEE6C3);"></div>
<div style="left:660px;top:315px;width:139px;height:20px;background:linear-gradient(#FCFAEC,#F7F2DC 45%,#EEE6C3);"></div>
<div style="left:660px;top:336px;width:139px;height:21px;background:linear-gradient(#FCFAEC,#F7F2DC 45%,#EEE6C3);"></div>
<div style="left:800px;top:252px;width:89px;height:20px;background:linear-gradient(#FCFAEC,#F7F2DC 45%,#EEE6C3);"></div>
<div style="left:890px;top:252px;width:46px;height:20px;background:linear-gradient(#FCFAEC,#F7F2DC 45%,#EEE6C3);"></div>
<div style="left:800px;top:273px;width:136px;height:20px;background:linear-gradient(#FCFAEC,#F7F2DC 45%,#EEE6C3);"></div>
<div style="left:800px;top:294px;width:136px;height:20px;background:linear-gradient(#FCFAEC,#F7F2DC 45%,#EEE6C3);"></div>
<div style="left:800px;top:315px;width:136px;height:20px;background:linear-gradient(#FCFAEC,#F7F2DC 45%,#EEE6C3);"></div>
<div style="left:800px;top:336px;width:136px;height:21px;background:linear-gradient(#FCFAEC,#F7F2DC 45%,#EEE6C3);"></div>
<div style="left:937px;top:252px;width:66px;height:20px;background:linear-gradient(#FCFAEC,#F7F2DC 45%,#EEE6C3);"></div>
<div style="left:937px;top:273px;width:66px;height:20px;background:linear-gradient(#FCFAEC,#F7F2DC 45%,#EEE6C3);"></div>
<div style="left:937px;top:294px;width:66px;height:63px;background:linear-gradient(#FCFAEC,#F7F2DC 45%,#EEE6C3);"></div>
<div style="left:1004px;top:252px;width:65px;height:20px;background:linear-gradient(#FCFAEC,#F7F2DC 45%,#EEE6C3);"></div>
<div style="left:1004px;top:273px;width:65px;height:20px;background:linear-gradient(#FCFAEC,#F7F2DC 45%,#EEE6C3);"></div>
<div style="left:1004px;top:294px;width:65px;height:63px;background:linear-gradient(#FCFAEC,#F7F2DC 45%,#EEE6C3);"></div>
<div style="left:1070px;top:252px;width:59px;height:105px;background:linear-gradient(#FCFAEC,#F7F2DC 45%,#EEE6C3);"></div>
<div style="left:1130px;top:252px;width:114px;height:20px;background:linear-gradient(#FCFAEC,#F7F2DC 45%,#EEE6C3);"></div>
<div style="left:1130px;top:273px;width:114px;height:20px;background:linear-gradient(#FCFAEC,#F7F2DC 45%,#EEE6C3);"></div>
<div style="left:1130px;top:294px;width:114px;height:20px;background:linear-gradient(#FCFAEC,#F7F2DC 45%,#EEE6C3);"></div>
<div style="left:1130px;top:315px;width:114px;height:42px;background:linear-gradient(#FCFAEC,#F7F2DC 45%,#EEE6C3);"></div>
<span style="top:255.19px;font-size:11px;line-height:14px;color:#4D3B00;left:563px;">№</span>
<span style="top:255.19px;font-size:11px;line-height:14px;color:#4D3B00;letter-spacing:0.289px;left:601px;">Акт...</span>
<span style="top:276.19px;font-size:11px;line-height:14px;color:#4D3B00;letter-spacing:-0.266px;left:563px;">Период</span>
<span style="top:297.19px;font-size:11px;line-height:14px;color:#4D3B00;letter-spacing:0.057px;left:563px;">ИФО</span>
<span style="top:255.19px;font-size:11px;line-height:14px;color:#4D3B00;left:638px;">К...</span>
<span style="top:255.19px;font-size:11px;line-height:14px;color:#4D3B00;letter-spacing:-0.018px;left:664px;">(Дт) КПС</span>
<span style="top:255.19px;font-size:11px;line-height:14px;color:#4D3B00;letter-spacing:0.016px;left:743px;">Счет Дт</span>
<span style="top:255.19px;font-size:11px;line-height:14px;color:#4D3B00;letter-spacing:-0.137px;left:804px;">(Кт) КПС</span>
<span style="top:255.19px;font-size:11px;line-height:14px;color:#4D3B00;letter-spacing:-0.121px;left:894px;">Счет Кт</span>
<span style="top:276.19px;font-size:11px;line-height:14px;color:#4D3B00;letter-spacing:-0.058px;left:664px;">СубконтоДт1</span>
<span style="top:276.19px;font-size:11px;line-height:14px;color:#4D3B00;letter-spacing:-0.054px;left:804px;">СубконтоКт1</span>
<span style="top:297.19px;font-size:11px;line-height:14px;color:#4D3B00;letter-spacing:-0.058px;left:664px;">СубконтоДт2</span>
<span style="top:297.19px;font-size:11px;line-height:14px;color:#4D3B00;letter-spacing:-0.054px;left:804px;">СубконтоКт2</span>
<span style="top:318.19px;font-size:11px;line-height:14px;color:#4D3B00;letter-spacing:-0.058px;left:664px;">СубконтоДт3</span>
<span style="top:318.19px;font-size:11px;line-height:14px;color:#4D3B00;letter-spacing:-0.054px;left:804px;">СубконтоКт3</span>
<span style="top:339.19px;font-size:11px;line-height:14px;color:#4D3B00;letter-spacing:-0.058px;left:664px;">СубконтоДт4</span>
<span style="top:339.19px;font-size:11px;line-height:14px;color:#4D3B00;letter-spacing:-0.054px;left:804px;">СубконтоКт4</span>
<span style="top:255.19px;font-size:11px;line-height:14px;color:#4D3B00;letter-spacing:-0.074px;left:941px;">(Дт) Коли...</span>
<span style="top:276.19px;font-size:11px;line-height:14px;color:#4D3B00;letter-spacing:-0.264px;left:941px;">(Дт) Валю...</span>
<span style="top:297.19px;font-size:11px;line-height:14px;color:#4D3B00;letter-spacing:-0.201px;left:941px;">(Дт) Вал.</span>
<span style="top:310.19px;font-size:11px;line-height:14px;color:#4D3B00;letter-spacing:0.175px;left:941px;">сумма</span>
<span style="top:255.19px;font-size:11px;line-height:14px;color:#4D3B00;letter-spacing:-0.070px;left:1008px;">(Кт) Коли...</span>
<span style="top:276.19px;font-size:11px;line-height:14px;color:#4D3B00;letter-spacing:-0.260px;left:1008px;">(Кт) Валю...</span>
<span style="top:297.19px;font-size:11px;line-height:14px;color:#4D3B00;letter-spacing:-0.307px;left:1008px;">(Кт) Вал.</span>
<span style="top:310.19px;font-size:11px;line-height:14px;color:#4D3B00;letter-spacing:0.175px;left:1008px;">сумма</span>
<span style="top:255.19px;font-size:11px;line-height:14px;color:#4D3B00;letter-spacing:-0.116px;left:1074px;">Сумма</span>
<span style="top:255.19px;font-size:11px;line-height:14px;color:#4D3B00;letter-spacing:-0.130px;left:1134px;">Содержание</span>
<span style="top:276.19px;font-size:11px;line-height:14px;color:#4D3B00;letter-spacing:-0.048px;left:1134px;">Номер журнала</span>
<span style="top:297.19px;font-size:11px;line-height:14px;color:#4D3B00;letter-spacing:0.017px;left:1134px;">(Дт) Характеристи...</span>
<span style="top:318.19px;font-size:11px;line-height:14px;color:#4D3B00;letter-spacing:0.021px;left:1134px;">(Кт) Характеристика</span>
<span style="top:331.19px;font-size:11px;line-height:14px;color:#4D3B00;letter-spacing:-0.095px;left:1134px;">движения по ...</span>
<div style="left:535px;top:357px;width:709px;height:94px;background:#F4FAF6;"></div>
<div style="left:558px;top:358px;width:1px;height:92px;background:#D3DAE6;"></div>
<div style="left:633px;top:358px;width:1px;height:92px;background:#D3DAE6;"></div>
<div style="left:659px;top:358px;width:1px;height:92px;background:#D3DAE6;"></div>
<div style="left:799px;top:358px;width:1px;height:92px;background:#D3DAE6;"></div>
<div style="left:936px;top:358px;width:1px;height:92px;background:#D3DAE6;"></div>
<div style="left:1003px;top:358px;width:1px;height:92px;background:#D3DAE6;"></div>
<div style="left:1069px;top:358px;width:1px;height:92px;background:#D3DAE6;"></div>
<div style="left:1129px;top:358px;width:1px;height:92px;background:#D3DAE6;"></div>
<div style="left:596px;top:358px;width:1px;height:17px;background:#EAEEF0;"></div>
<div style="left:738px;top:358px;width:1px;height:17px;background:#EAEEF0;"></div>
<div style="left:889px;top:358px;width:1px;height:17px;background:#EAEEF0;"></div>
<div style="left:660px;top:375px;width:139px;height:1px;background:#EAEEF0;"></div>
<div style="left:800px;top:375px;width:136px;height:1px;background:#EAEEF0;"></div>
<div style="left:559px;top:375px;width:74px;height:1px;background:#EAEEF0;"></div>
<div style="left:937px;top:375px;width:66px;height:1px;background:#EAEEF0;"></div>
<div style="left:1004px;top:375px;width:65px;height:1px;background:#EAEEF0;"></div>
<div style="left:1130px;top:375px;width:114px;height:1px;background:#EAEEF0;"></div>
<div style="left:660px;top:394px;width:139px;height:1px;background:#EAEEF0;"></div>
<div style="left:800px;top:394px;width:136px;height:1px;background:#EAEEF0;"></div>
<div style="left:559px;top:394px;width:74px;height:1px;background:#EAEEF0;"></div>
<div style="left:937px;top:394px;width:66px;height:1px;background:#EAEEF0;"></div>
<div style="left:1004px;top:394px;width:65px;height:1px;background:#EAEEF0;"></div>
<div style="left:1130px;top:394px;width:114px;height:1px;background:#EAEEF0;"></div>
<div style="left:660px;top:413px;width:139px;height:1px;background:#EAEEF0;"></div>
<div style="left:800px;top:413px;width:136px;height:1px;background:#EAEEF0;"></div>
<div style="left:1130px;top:413px;width:114px;height:1px;background:#EAEEF0;"></div>
<div style="left:660px;top:432px;width:139px;height:1px;background:#EAEEF0;"></div>
<div style="left:800px;top:432px;width:136px;height:1px;background:#EAEEF0;"></div>
<div style="left:535px;top:357px;width:709px;height:1px;background:repeating-linear-gradient(90deg,#222 0,#222 1px,transparent 1px,transparent 2px);"></div>
<div style="left:535px;top:450px;width:709px;height:1px;background:repeating-linear-gradient(90deg,#222 0,#222 1px,transparent 1px,transparent 2px);"></div>
<div style="left:535px;top:357px;width:1px;height:94px;background:repeating-linear-gradient(0deg,#222 0,#222 1px,transparent 1px,transparent 2px);"></div>
<svg style="left:539px;top:358px" width="17" height="15" viewBox="0 0 17 15"><text x="0" y="6" font-family="Liberation Sans" font-weight="700" font-size="7.5" fill="#3A73B8">Дт</text><text x="5" y="13.5" font-family="Liberation Sans" font-weight="700" font-size="8" fill="#E03A2A">Кт</text></svg>
<span style="top:360.19px;font-size:11px;line-height:14px;color:#000;right:849.00px;">1</span>
<svg style="left:603px;top:363px" width="9" height="8" viewBox="0 0 9 8"><path d="M.8 4l2.700 3L8.300 .8" fill="none" stroke="#2A2A2A" stroke-width="1.900"/></svg>
<span style="top:360.19px;font-size:11px;line-height:14px;color:#000;left:638px;">4</span>
<span style="top:360.19px;font-size:11px;line-height:14px;color:#000;letter-spacing:-0.181px;left:664px;">0412122090...</span>
<span style="top:360.19px;font-size:11px;line-height:14px;color:#000;letter-spacing:-0.109px;left:743px;">507.10</span>
<span style="top:360.19px;font-size:11px;line-height:14px;color:#000;letter-spacing:-0.162px;left:804px;">0412122090П...</span>
<span style="top:360.19px;font-size:11px;line-height:14px;color:#000;letter-spacing:-0.138px;left:894px;">504.11</span>
<span style="top:360.19px;font-size:11px;line-height:14px;color:#000;letter-spacing:-0.182px;left:1074px;">15 952 7...</span>
<span style="top:360.19px;font-size:11px;line-height:14px;color:#000;letter-spacing:0.124px;left:1134px;">Доходы  МБУ ТЭУ...</span>
<span style="top:379.19px;font-size:11px;line-height:14px;color:#000;letter-spacing:-0.163px;left:563px;">18.01.2016 ...</span>
<span style="top:379.19px;font-size:11px;line-height:14px;color:#000;letter-spacing:-0.120px;left:664px;">180</span>
<span style="top:379.19px;font-size:11px;line-height:14px;color:#000;letter-spacing:-0.120px;left:804px;">180</span>
<span style="top:379.19px;font-size:11px;line-height:14px;color:#000;left:1134px;">9</span>
<span style="top:398.19px;font-size:11px;line-height:14px;color:#000;letter-spacing:-0.099px;left:664px;">Муниципальное задание</span>
<div style="left:535px;top:488px;width:709px;height:15px;background:#FBFAF3;"></div>
<div style="left:535px;top:488px;width:709px;height:1px;background:#E4DEC6;"></div>
<div style="left:536px;top:489px;width:18px;height:13px;background:#F5F1DC;border:1px solid #E0D9BC;box-sizing:border-box;"></div>
<svg style="left:541px;top:491px" width="6" height="9" viewBox="0 0 6 9"><path d="M5 .8L1.200 4.500 5 8.200" fill="none" stroke="#9A9686" stroke-width="1.300"/></svg>
<div style="left:555px;top:489px;width:591px;height:13px;background:linear-gradient(#FAF7E6,#EFE8C8);border:1px solid #E0D9BC;box-sizing:border-box;"></div>
<div style="left:1224px;top:489px;width:19px;height:13px;background:#F5F1DC;border:1px solid #E0D9BC;box-sizing:border-box;"></div>
<svg style="left:1231px;top:491px" width="6" height="9" viewBox="0 0 6 9"><path d="M1 .8L4.800 4.500 1 8.200" fill="none" stroke="#9A9686" stroke-width="1.300"/></svg>
<div style="left:519px;top:520px;width:740px;height:1px;background:#C9BE96;"></div>
<div style="left:519px;top:521px;width:740px;height:23px;background:#F5F2DE;"></div>
<span style="top:525.19px;font-size:11px;line-height:14px;color:#4D3B00;letter-spacing:-0.022px;left:1002px;">Отчет по движениям документа</span>
<div style="left:1171px;top:523px;width:1px;height:18px;background:#CEC6A2;"></div>
<div style="left:1172px;top:523px;width:1px;height:18px;background:#FFFEF6;"></div>
<span style="top:525.19px;font-size:11px;line-height:14px;color:#4D3B00;font-weight:700;letter-spacing:0.250px;left:1178px;">OK</span>
<div style="left:1201px;top:523px;width:1px;height:18px;background:#CEC6A2;"></div>
<div style="left:1202px;top:523px;width:1px;height:18px;background:#FFFEF6;"></div>
<span style="top:525.19px;font-size:11px;line-height:14px;color:#4D3B00;letter-spacing:0.089px;left:1210px;">Закрыть</span>
<div style="left:0px;top:815px;width:1440px;height:45px;background:#F5F2DE;"></div>
<div style="left:0px;top:815px;width:1440px;height:1px;background:#FFFFFF;"></div>
<div style="left:0px;top:816px;width:1440px;height:1px;background:#FBF9F0;"></div>
<div style="left:2px;top:818px;width:171px;height:20px;background:#B3B3B3;border:1px solid #C9C2A0;box-sizing:border-box;"></div>
<span style="top:821.19px;font-size:11px;line-height:14px;color:#1E1E1E;letter-spacing:-0.130px;left:21px;">Сводные данные об исполн...</span>
<svg style="left:6px;top:821px" width="12" height="14" viewBox="0 0 12 14"><path d="M.5 .5h7l4 4v9H.5z" fill="#fff" stroke="#8FA7C4"/></svg>
<div style="left:175px;top:818px;width:171px;height:20px;background:#B3B3B3;border:1px solid #C9C2A0;box-sizing:border-box;"></div>
<span style="top:821.19px;font-size:11px;line-height:14px;color:#1E1E1E;letter-spacing:-0.070px;left:193px;">Оборотно-сальдовая ведом...</span>
<svg style="left:178px;top:819px" width="17" height="18" viewBox="0 0 17 18"><rect x="1.500" y="3.500" width="12" height="11" fill="#E4E9F0" stroke="#7C8796"/><rect x="2" y="4" width="11" height="3" fill="#B9C2CE"/><path d="M1.500 7.500h12M1.500 10.500h12M5.500 3.500v11M9.500 3.500v11" stroke="#7C8796"/><text x="9" y="17" font-family="Liberation Serif" font-weight="700" font-size="10.500" fill="#0A0AE6" stroke="#0A0AE6" stroke-width=".3">T</text></svg>
<div style="left:348px;top:818px;width:171px;height:20px;background:#B3B3B3;border:1px solid #C9C2A0;box-sizing:border-box;"></div>
<span style="top:821.19px;font-size:11px;line-height:14px;color:#1E1E1E;letter-spacing:0.024px;left:366px;">Карточка счета 507.10 за 2...</span>
<svg style="left:351px;top:819px" width="17" height="18" viewBox="0 0 17 18"><path d="M1.500 2.500h9l3 3v9h-12z" fill="#EEF1F5" stroke="#7C8796"/><path d="M10.500 2.500v3h3" fill="#D5DAE2" stroke="#7C8796"/><path d="M3 6.500h7M3 8.500h9M3 10.500h9M3 12.500h9" stroke="#7C8796" stroke-width="1"/><text x="9" y="17" font-family="Liberation Serif" font-weight="700" font-size="10.500" fill="#0A0AE6" stroke="#0A0AE6" stroke-width=".3">T</text></svg>
<div style="left:521px;top:818px;width:171px;height:20px;background:#B3B3B3;border:1px solid #C9C2A0;box-sizing:border-box;"></div>
<span style="top:821.19px;font-size:11px;line-height:14px;color:#1E1E1E;letter-spacing:0.050px;left:540px;">Документы Плановые назн...</span>
<svg style="left:526px;top:821px" width="13" height="14" viewBox="0 0 13 14"><rect x="0.5" y="0.5" width="12" height="13" fill="#fff" stroke="#7090AE"/><path d="M5 2.5h6M5 4.5h6M2 7.5h9M2 9.5h9M2 11.5h9" stroke="#A9BDCD" stroke-width="1"/></svg>
<div style="left:694px;top:818px;width:171px;height:20px;background:#B3B3B3;border:1px solid #C9C2A0;box-sizing:border-box;"></div>
<svg style="left:699px;top:821px" width="13" height="14" viewBox="0 0 13 14"><rect x="0.5" y="0.5" width="12" height="13" fill="#fff" stroke="#7090AE"/><path d="M5 2.5h6M5 4.5h6M2 7.5h9M2 9.5h9M2 11.5h9" stroke="#A9BDCD" stroke-width="1"/></svg>
<div style="left:867px;top:818px;width:171px;height:20px;background:#B4CDE8;border:1px solid #C9C2A0;box-sizing:border-box;"></div>
<span style="top:821.19px;font-size:11px;line-height:14px;color:#1E1E1E;letter-spacing:0.017px;left:885px;">Результат проведения д...:06</span>
<svg style="left:869px;top:819px" width="17" height="17" viewBox="0 0 17 17"><defs><linearGradient id="rb2" x1="0" y1="0" x2="0" y2="1"><stop offset="0" stop-color="#5FA4D8"/><stop offset=".55" stop-color="#C4E8FA"/><stop offset="1" stop-color="#4E94CC"/></linearGradient></defs><rect x="1.500" y="9" width="8.500" height="6.500" rx="2" fill="url(#rb2)" stroke="#3F7FB8" stroke-width=".8"/><path d="M5.500 5.500V11M5.500 5.500H9" fill="none" stroke="#000" stroke-width="1" stroke-dasharray="1 1"/><path d="M3 11h5l-2.500 3z" fill="#000"/><path d="M12 1.300L16.200 5.500 12 9.700 7.800 5.500z" fill="#F8DC3A" stroke="#EFC070" stroke-width=".6"/></svg>
<span style="top:821.19px;font-size:11px;line-height:14px;color:#1E1E1E;letter-spacing:-0.268px;left:712px;">(Заливахина Ю.А.</span>
<span style="top:821.19px;font-size:11px;line-height:14px;color:#1E1E1E;letter-spacing:-0.078px;left:836px;">...:06</span>
<div style="left:0px;top:841px;width:1367px;height:18px;border:1px solid #E2DCC2;box-sizing:border-box;border-left:none;"></div>
<span style="top:843.19px;font-size:11px;line-height:14px;color:#1A1200;letter-spacing:0.007px;left:5px;">Для получения подсказки нажмите F1</span>
<div style="left:1372px;top:841px;width:29px;height:18px;border:1px solid #E2DCC2;box-sizing:border-box;"></div>
<div style="left:1406px;top:841px;width:29px;height:18px;border:1px solid #E2DCC2;box-sizing:border-box;"></div>
<span style="top:843.19px;font-size:11px;line-height:14px;color:#A89A68;letter-spacing:-0.542px;left:1375px;">CAP</span>
<span style="top:843.19px;font-size:11px;line-height:14px;color:#1A1200;letter-spacing:-0.688px;left:1410px;">NUM</span>
<div style="left:0px;top:860px;width:1440px;height:40px;background:#66C8EA;"></div>
<div style="left:0px;top:860px;width:1440px;height:1px;background:#3E4A50;"></div>
<div style="left:0px;top:899px;width:1440px;height:1px;background:#3E4A50;"></div>
<svg style="left:11px;top:866px" width="28" height="28" viewBox="0 0 28 28"><path d="M0 4.500L11.500 2.800V13.300H0zM13 2.600L28 .3V13.300H13zM0 14.700H11.500V25.200L0 23.500zM13 14.700H28V27.700L13 25.400z" fill="#fff"/></svg>
<svg style="left:65px;top:866px" width="33" height="30" viewBox="0 0 33 30"><path d="M1 5h10l2 2h17v5H1z" fill="#E9C45A" stroke="#B8922A" stroke-width=".8"/><rect x="4" y="3.500" width="3" height="2" fill="#3FAE3A"/><rect x="9" y="3.500" width="3" height="2" fill="#E03A2A"/><rect x="21" y="6" width="3" height="2" fill="#3A7AE0"/><path d="M1 10h30v17H1z" fill="#F6DE8C" stroke="#C9A23A" stroke-width=".8"/><path d="M5 27v-8h23v8h-5v-4H10v4z" fill="#7FC4EE" stroke="#3A8AC0" stroke-width=".8"/></svg>
<svg style="left:128px;top:866px" width="31" height="31" viewBox="0 0 31 31"><circle cx="15.500" cy="15.500" r="14.500" fill="#DB4437"/><path d="M15.500 15.500L2.900 8.200A14.500 14.500 0 0015.500 30l6.300-10.900z" fill="#0F9D58"/><path d="M15.500 15.500l6.300 3.600L15.500 30A14.500 14.500 0 0028.100 8.200H15.500z" fill="#FFCD40"/><circle cx="15.500" cy="15.500" r="6.600" fill="#fff"/><circle cx="15.500" cy="15.500" r="5.200" fill="#4285F4"/></svg>
<div style="left:176px;top:861px;width:59px;height:38px;background:#A6DCF1;border:1px solid #4A6A78;box-sizing:border-box;border-top:none;border-bottom:none;"></div>
<svg style="left:190px;top:866px" width="30" height="30" viewBox="0 0 30 30"><defs><radialGradient id="tg" cx=".4" cy=".3" r=".8"><stop offset="0" stop-color="#FFF8B0"/><stop offset=".55" stop-color="#FFD21A"/><stop offset="1" stop-color="#E8A400"/></radialGradient></defs><circle cx="15" cy="15" r="14.500" fill="url(#tg)"/><text x="3" y="20.500" font-family="Liberation Sans" font-weight="700" font-size="15" fill="#E0201A">1С</text><path d="M17 21.500h11" stroke="#E0201A" stroke-width="1.500"/></svg>
<svg style="left:1229px;top:877px" width="8" height="5" viewBox="0 0 8 5"><path d="M4 0l4 5H0z" fill="#111"/></svg>
<svg style="left:1249px;top:871px" width="17" height="18" viewBox="0 0 17 18"><path d="M2 1v15" stroke="#fff" stroke-width="1.600"/><path d="M3 2c3-1.500 5 1.500 9 0v7c-4 1.500-6-1.500-9 0z" fill="#fff"/><circle cx="11.500" cy="12.500" r="4.300" fill="#E8382A" stroke="#fff" stroke-width=".8"/><path d="M9.800 10.800l3.400 3.400M13.200 10.800l-3.400 3.400" stroke="#fff" stroke-width="1.300"/></svg>
<svg style="left:1273px;top:872px" width="17" height="16" viewBox="0 0 17 16"><rect x="1" y=".8" width="6" height="9" fill="none" stroke="#fff" stroke-width="1.500"/><rect x="6.500" y="3.500" width="9" height="7" fill="#66C8EA" stroke="#fff" stroke-width="1.500"/><path d="M8 14.500h6M11 11v3" stroke="#fff" stroke-width="1.500"/></svg>
<svg style="left:1297px;top:871px" width="17" height="18" viewBox="0 0 17 18"><path d="M1 6h3l4-4v13l-4-4H1z" fill="#fff"/><circle cx="11.500" cy="12.500" r="4.300" fill="#E8382A" stroke="#fff" stroke-width=".8"/><path d="M9.800 10.800l3.400 3.400M13.200 10.800l-3.400 3.400" stroke="#fff" stroke-width="1.300"/></svg>
<span style="top:873.52px;font-size:11.5px;line-height:15px;color:#111;letter-spacing:-0.344px;left:1328px;">РУС</span>
<span style="top:864.52px;font-size:11.5px;line-height:15px;color:#111;letter-spacing:-0.416px;left:1382px;">11:11</span>
<span style="top:881.52px;font-size:11.5px;line-height:15px;color:#111;letter-spacing:-0.356px;left:1367px;">23.03.2016</span>
<svg style="left:0;top:0" width="1440" height="900" viewBox="0 0 1440 900"><path d="M327.5 421C327.2 423.5 326.4 430.3 325.5 436C324.6 441.7 323.8 449.8 322 455C320.2 460.2 318.7 464.0 315 467C311.3 470.0 305.8 471.2 300 473C294.2 474.8 288.3 476.8 280 478C271.7 479.2 263.3 480.7 250 480.5C236.7 480.3 214.2 478.8 200 477C185.8 475.2 173.7 472.8 165 470C156.3 467.2 152.2 463.8 148 460C143.8 456.2 140.5 451.2 140 447C139.5 442.8 141.7 438.8 145 435C148.3 431.2 153.3 426.7 160 424C166.7 421.3 173.3 420.1 185 419C196.7 417.9 215.0 417.4 230 417.5C245.0 417.6 262.5 417.8 275 419.5C287.5 421.2 297.5 425.5 305 428C312.5 430.5 316.6 433.1 320 434.5C323.4 435.9 324.6 436.2 325.5 436.5" fill="none" stroke="#F01A22" stroke-width="1.15"/><path d="M725.7 341.5C725.1 341.0 724.3 338.9 722 338.3C719.7 337.7 716.7 337.7 712 338C707.3 338.3 700.0 339.0 694 340C688.0 341.0 681.4 342.2 676 344C670.6 345.8 665.6 347.9 661.7 350.5C657.8 353.1 654.9 355.4 652.6 359.6C650.3 363.8 648.1 371.1 648 375.8C647.9 380.5 648.5 385.1 651.7 388C654.9 390.9 660.0 391.3 667 393C674.0 394.7 685.0 396.9 694 398.4C703.0 399.9 714.0 401.6 721 402C728.0 402.4 730.5 402.4 735.7 401C740.9 399.6 747.0 397.5 752 393.9C757.0 390.3 761.2 383.9 766 379.4C770.8 374.9 778.4 371.0 780.8 366.8C783.2 362.6 781.4 358.1 780.4 354C779.4 349.9 776.8 344.9 774.5 342.4C772.2 339.9 769.9 340.3 766.4 338.8C762.9 337.3 759.1 334.4 753.7 333.4C748.3 332.4 740.1 332.9 733.9 333C727.7 333.1 719.6 333.8 716.7 334" fill="none" stroke="#F01A22" stroke-width="1.15"/><path d="M890 333.4C886.0 332.8 874.3 330.9 865.7 329.8C857.1 328.7 847.6 327.8 838.6 327C829.6 326.2 818.6 325.7 811.5 325.3C804.4 324.9 800.2 323.3 796 324.4C791.8 325.4 788.4 328.8 786.2 331.6C784.0 334.5 783.5 337.8 782.6 341.5C781.7 345.2 781.1 349.9 780.8 354C780.5 358.1 780.1 362.7 781 366C781.9 369.3 783.3 370.2 786 374C788.7 377.8 792.5 382.8 797 388.5C801.5 394.2 807.0 402.9 813.3 408.3C819.6 413.7 831.4 418.9 835 421" fill="none" stroke="#F01A22" stroke-width="1.15"/><path d="M835 421C839.0 419.5 853.1 416.8 859.3 412C865.5 407.2 869.1 400.2 872 392C874.9 383.8 874.7 372.2 876.5 363C878.3 353.8 881.8 341.3 882.8 337" fill="none" stroke="#F01A22" stroke-width="1.15"/></svg>
</body></html>
